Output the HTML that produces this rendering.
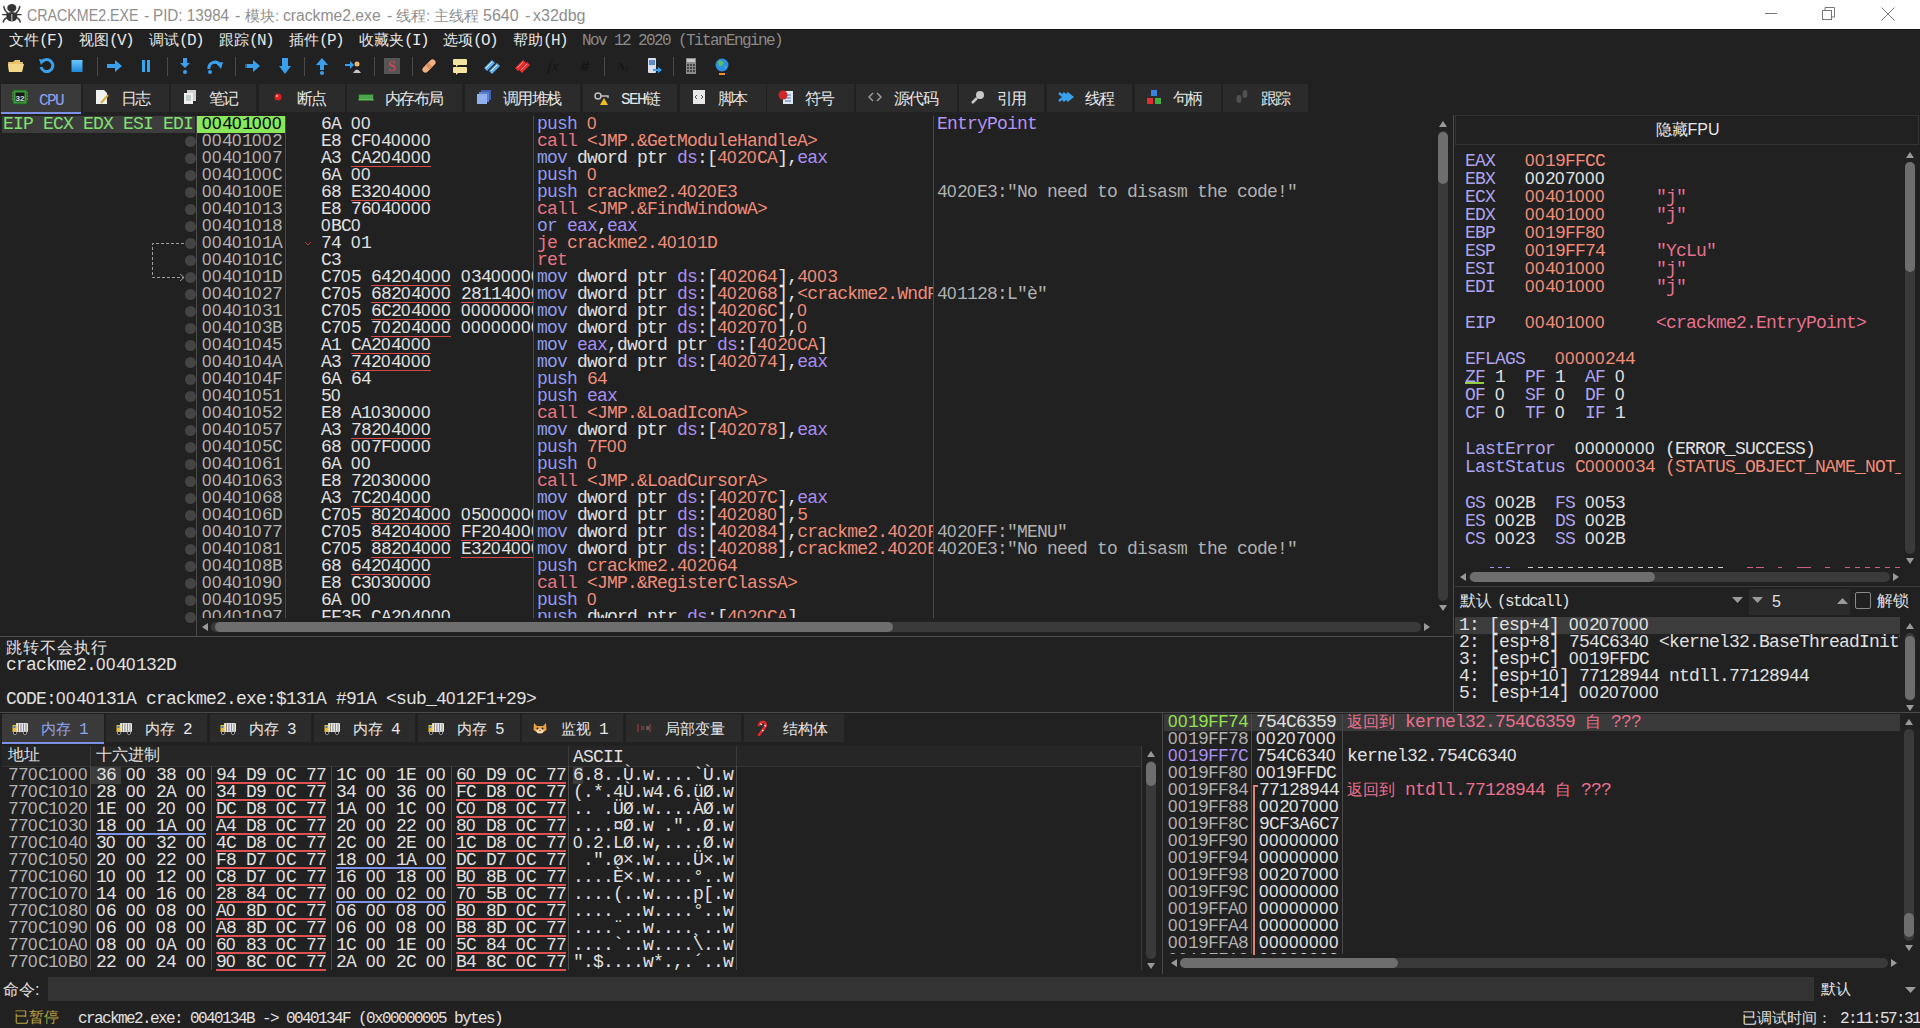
<!DOCTYPE html><html><head><meta charset="utf-8"><style>
html,body{margin:0;padding:0;width:1920px;height:1028px;overflow:hidden;background:#212121;}
.b{position:absolute;}
.t{position:absolute;white-space:pre;}
.m{position:absolute;white-space:pre;font-family:'Liberation Mono',monospace;font-size:18px;letter-spacing:-0.8px;color:#e0e0e0;}
.clip{position:absolute;overflow:hidden;}
svg{position:absolute;}
</style></head><body>
<div class="b" style="left:0px;top:0px;width:1920px;height:29px;background:#ffffff;"></div>
<svg style="left:0;top:0" width="26" height="28" viewBox="0 0 26 28">
<g stroke="#444" stroke-width="1.5" fill="none" stroke-linecap="round"><path d="M3.8 6.5 Q4.5 11 8 13.5"/><path d="M19.8 6.5 Q19 11 15.5 13.5"/><path d="M3.2 22 Q4 18.5 7.5 17.5"/><path d="M20.3 22 Q19.5 18.5 16 17.5"/></g>
<path d="M2.2 14.6 H21.6" stroke="#333" stroke-width="1.3"/>
<ellipse cx="11.8" cy="8" rx="4.6" ry="4" fill="#333"/>
<path d="M6.3 13.5 Q11.8 10.5 17.3 13.5 Q18 21.5 11.8 21.5 Q5.6 21.5 6.3 13.5 Z" fill="#333"/>
<rect x="11.1" y="14" width="1.4" height="7" fill="#aaa"/></svg>
<div class="t" style="left:27px;top:6px;color:#8e8e8e;font-size:16px;line-height:20px;font-family:'Liberation Sans',sans-serif;transform-origin:0 0;transform:scaleX(0.89)">CRACKME2.EXE</div>
<div class="t" style="left:144px;top:6px;color:#8e8e8e;font-size:16px;line-height:20px;font-family:'Liberation Sans',sans-serif;transform-origin:0 0;transform:scaleX(1)">-</div>
<div class="t" style="left:153px;top:6px;color:#8e8e8e;font-size:16px;line-height:20px;font-family:'Liberation Sans',sans-serif;transform-origin:0 0;transform:scaleX(0.95)">PID: 13984</div>
<div class="t" style="left:235px;top:6px;color:#8e8e8e;font-size:16px;line-height:20px;font-family:'Liberation Sans',sans-serif;transform-origin:0 0;transform:scaleX(1)">-</div>
<div class="t" style="left:245px;top:6px;color:#8e8e8e;font-size:15px;line-height:20px;font-family:'Liberation Sans',sans-serif;transform-origin:0 0;transform:scaleX(1)">模块:</div>
<div class="t" style="left:283px;top:6px;color:#8e8e8e;font-size:16px;line-height:20px;font-family:'Liberation Sans',sans-serif;transform-origin:0 0;transform:scaleX(0.98)">crackme2.exe</div>
<div class="t" style="left:387px;top:6px;color:#8e8e8e;font-size:16px;line-height:20px;font-family:'Liberation Sans',sans-serif;transform-origin:0 0;transform:scaleX(1)">-</div>
<div class="t" style="left:396px;top:6px;color:#8e8e8e;font-size:15px;line-height:20px;font-family:'Liberation Sans',sans-serif;transform-origin:0 0;transform:scaleX(1)">线程:</div>
<div class="t" style="left:434px;top:6px;color:#8e8e8e;font-size:15px;line-height:20px;font-family:'Liberation Sans',sans-serif;transform-origin:0 0;transform:scaleX(1)">主线程</div>
<div class="t" style="left:483px;top:6px;color:#8e8e8e;font-size:16px;line-height:20px;font-family:'Liberation Sans',sans-serif;transform-origin:0 0;transform:scaleX(1)">5640</div>
<div class="t" style="left:525px;top:6px;color:#8e8e8e;font-size:16px;line-height:20px;font-family:'Liberation Sans',sans-serif;transform-origin:0 0;transform:scaleX(1)">-</div>
<div class="t" style="left:533px;top:6px;color:#8e8e8e;font-size:16px;line-height:20px;font-family:'Liberation Sans',sans-serif;transform-origin:0 0;transform:scaleX(1)">x32dbg</div>
<div class="b" style="left:1765px;top:13px;width:12px;height:1px;background:#777;"></div>
<svg style="left:1822px;top:7px" width="14" height="14"><rect x="0.5" y="3.5" width="9" height="9" fill="none" stroke="#777"/><path d="M3 3.5 V0.5 H12.5 V10 H9.5" fill="none" stroke="#777"/></svg>
<svg style="left:1881px;top:7px" width="14" height="14"><path d="M0.5 0.5 L13.5 13.5 M13.5 0.5 L0.5 13.5" stroke="#777" stroke-width="1"/></svg>
<div class="b" style="left:0px;top:29px;width:1920px;height:1px;background:#161616;"></div>
<div class="t" style="left:9px;top:30px;color:#e8e8e8;font-size:15px;line-height:20px;font-family:'Liberation Sans',sans-serif">文件<span style="font-family:'Liberation Mono';font-size:16px;letter-spacing:-1.6px">(F)</span></div>
<div class="t" style="left:79px;top:30px;color:#e8e8e8;font-size:15px;line-height:20px;font-family:'Liberation Sans',sans-serif">视图<span style="font-family:'Liberation Mono';font-size:16px;letter-spacing:-1.6px">(V)</span></div>
<div class="t" style="left:149px;top:30px;color:#e8e8e8;font-size:15px;line-height:20px;font-family:'Liberation Sans',sans-serif">调试<span style="font-family:'Liberation Mono';font-size:16px;letter-spacing:-1.6px">(D)</span></div>
<div class="t" style="left:219px;top:30px;color:#e8e8e8;font-size:15px;line-height:20px;font-family:'Liberation Sans',sans-serif">跟踪<span style="font-family:'Liberation Mono';font-size:16px;letter-spacing:-1.6px">(N)</span></div>
<div class="t" style="left:289px;top:30px;color:#e8e8e8;font-size:15px;line-height:20px;font-family:'Liberation Sans',sans-serif">插件<span style="font-family:'Liberation Mono';font-size:16px;letter-spacing:-1.6px">(P)</span></div>
<div class="t" style="left:359px;top:30px;color:#e8e8e8;font-size:15px;line-height:20px;font-family:'Liberation Sans',sans-serif">收藏夹<span style="font-family:'Liberation Mono';font-size:16px;letter-spacing:-1.6px">(I)</span></div>
<div class="t" style="left:443px;top:30px;color:#e8e8e8;font-size:15px;line-height:20px;font-family:'Liberation Sans',sans-serif">选项<span style="font-family:'Liberation Mono';font-size:16px;letter-spacing:-1.6px">(O)</span></div>
<div class="t" style="left:513px;top:30px;color:#e8e8e8;font-size:15px;line-height:20px;font-family:'Liberation Sans',sans-serif">帮助<span style="font-family:'Liberation Mono';font-size:16px;letter-spacing:-1.6px">(H)</span></div>
<div class="t" style="left:582px;top:31px;color:#8a8a8a;font-size:16px;letter-spacing:-1.6px;line-height:20px;font-family:'Liberation Mono',monospace">Nov 12 2020 (TitanEngine)</div>
<svg style="left:7px;top:57px" width="18" height="18" viewBox="0 0 18 18"><path d="M1 5 H6 L8 3 H13 V5 H16 L15 15 H2 Z" fill="#e8c36a"/><path d="M1 7 H17 L15 15 H2 Z" fill="#f2d68a"/></svg>
<svg style="left:38px;top:57px" width="18" height="18" viewBox="0 0 18 18"><path d="M4 5 A6 6 0 1 1 3 10" stroke="#3ba0e8" stroke-width="3" fill="none"/><path d="M1 2 L7 3 L3 8 Z" fill="#3ba0e8"/></svg>
<svg style="left:68px;top:57px" width="18" height="18" viewBox="0 0 18 18"><defs><linearGradient id="gs" x1="0" y1="0" x2="0" y2="1"><stop offset="0" stop-color="#6cc8ff"/><stop offset="1" stop-color="#1f88d8"/></linearGradient></defs><rect x="3.5" y="3" width="11" height="12" fill="url(#gs)"/></svg>
<div class="b" style="left:97px;top:57px;width:1px;height:19px;background:#4a4a4a;"></div>
<svg style="left:106px;top:57px" width="18" height="18" viewBox="0 0 18 18"><path d="M1 7 H9 V3 L16 9 L9 15 V11 H1 Z" fill="#3aa0ee"/></svg>
<svg style="left:137px;top:57px" width="18" height="18" viewBox="0 0 18 18"><rect x="5" y="3" width="3" height="12" fill="#38a6ee"/><rect x="10" y="3" width="3" height="12" fill="#38a6ee"/></svg>
<div class="b" style="left:167px;top:57px;width:1px;height:19px;background:#4a4a4a;"></div>
<svg style="left:176px;top:57px" width="18" height="18" viewBox="0 0 18 18"><path d="M7 1 H11 V6 H14 L9 11 L4 6 H7 Z" fill="#3aa0ee"/><circle cx="9" cy="15" r="2" fill="#3aa0ee"/></svg>
<svg style="left:206px;top:57px" width="18" height="18" viewBox="0 0 18 18"><path d="M3 12 A6 6 0 0 1 14 8" stroke="#3aa0ee" stroke-width="3" fill="none"/><path d="M10 6 L17 5 L15 12 Z" fill="#3aa0ee"/><circle cx="4" cy="15" r="2" fill="#3aa0ee"/></svg>
<div class="b" style="left:235px;top:57px;width:1px;height:19px;background:#4a4a4a;"></div>
<svg style="left:244px;top:57px" width="18" height="18" viewBox="0 0 18 18"><path d="M1 7 H9 V3 L16 9 L9 15 V11 H1 Z" fill="#3aa0ee"/><path d="M1 8 H3 M1 10 H3" stroke="#212121"/></svg>
<svg style="left:276px;top:57px" width="18" height="18" viewBox="0 0 18 18"><path d="M6 1 H12 V9 H15 L9 17 L3 9 H6 Z" fill="#3aa0ee"/></svg>
<div class="b" style="left:304px;top:57px;width:1px;height:19px;background:#4a4a4a;"></div>
<svg style="left:313px;top:57px" width="18" height="18" viewBox="0 0 18 18"><path d="M9 1 L15 8 H11 V13 H7 V8 H3 Z" fill="#3aa0ee"/><circle cx="9" cy="16" r="2" fill="#3aa0ee"/></svg>
<svg style="left:344px;top:57px" width="18" height="18" viewBox="0 0 18 18"><path d="M1 7 H6 V4 L10 8 L6 12 V9 H1 Z" fill="#3aa0ee"/><circle cx="13" cy="7" r="2.5" fill="#e8b870"/><path d="M9 16 Q13 9 17 16 Z" fill="#c8c8c8"/></svg>
<div class="b" style="left:374px;top:57px;width:1px;height:19px;background:#4a4a4a;"></div>
<svg style="left:383px;top:57px" width="18" height="18" viewBox="0 0 18 18"><rect x="1" y="1" width="16" height="16" fill="#555"/><text x="9" y="14" font-size="14" font-weight="bold" fill="#c04858" text-anchor="middle" font-family="Liberation Serif">S</text></svg>
<div class="b" style="left:412px;top:57px;width:1px;height:19px;background:#4a4a4a;"></div>
<svg style="left:420px;top:57px" width="18" height="18" viewBox="0 0 18 18"><rect x="1" y="6" width="16" height="6" rx="3" fill="#f0b080" transform="rotate(-45 9 9)"/><rect x="7" y="6" width="4" height="6" fill="#d89060" transform="rotate(-45 9 9)"/></svg>
<svg style="left:451px;top:57px" width="18" height="18" viewBox="0 0 18 18"><rect x="2" y="2" width="14" height="6" rx="1" fill="#f4e4a0"/><rect x="2" y="10" width="14" height="6" rx="1" fill="#f4e4a0"/><path d="M5 8 L5 10 L7 8Z M5 16 L5 18 L7 16Z" fill="#f4e4a0"/></svg>
<svg style="left:483px;top:57px" width="18" height="18" viewBox="0 0 18 18"><path d="M1 11 L9 3 L12 6 L4 14 Z" fill="#60b0f0"/><path d="M6 14 L14 6 L17 9 L9 17 Z" fill="#60b0f0"/><path d="M3 11 L9 5 M8 14 L14 8" stroke="#e8f4ff" stroke-width="1"/></svg>
<svg style="left:514px;top:57px" width="18" height="18" viewBox="0 0 18 18"><path d="M1 11 L9 3 L12 6 L4 14 Z" fill="#e83030"/><path d="M5 13 L13 5 L16 8 L8 16 Z" fill="#e83030"/><path d="M3 11 L9 5 M7 13 L13 7" stroke="#ff9090" stroke-width="1"/></svg>
<svg style="left:544px;top:57px" width="18" height="18" viewBox="0 0 18 18"><text x="9" y="14" font-size="15" font-style="italic" fill="#141414" text-anchor="middle" font-family="Liberation Serif">fx</text></svg>
<svg style="left:576px;top:57px" width="18" height="18" viewBox="0 0 18 18"><text x="9" y="14" font-size="15" font-weight="bold" fill="#141414" text-anchor="middle" font-family="Liberation Sans">#</text></svg>
<div class="b" style="left:604px;top:57px;width:1px;height:19px;background:#4a4a4a;"></div>
<svg style="left:614px;top:57px" width="18" height="18" viewBox="0 0 18 18"><text x="7" y="13" font-size="11" font-weight="bold" fill="#161616" text-anchor="middle" font-family="Liberation Serif">A</text><text x="13" y="14" font-size="7" fill="#161616" text-anchor="middle" font-family="Liberation Sans">z</text></svg>
<svg style="left:645px;top:57px" width="18" height="18" viewBox="0 0 18 18"><rect x="3" y="1" width="8" height="15" rx="1" fill="#d8e0ec"/><rect x="4" y="3" width="6" height="5" fill="#5a8ac8"/><path d="M8 12 H13 V10 L17 13 L13 16 V14 H8 Z" fill="#3aa0ee"/></svg>
<div class="b" style="left:673px;top:57px;width:1px;height:19px;background:#4a4a4a;"></div>
<svg style="left:682px;top:57px" width="18" height="18" viewBox="0 0 18 18"><rect x="4" y="1" width="10" height="16" fill="#8a8a8a"/><rect x="5" y="2" width="8" height="3" fill="#c8c8c8"/><g fill="#444"><rect x="5" y="7" width="2" height="2"/><rect x="8" y="7" width="2" height="2"/><rect x="11" y="7" width="2" height="2"/><rect x="5" y="10" width="2" height="2"/><rect x="8" y="10" width="2" height="2"/><rect x="11" y="10" width="2" height="2"/><rect x="5" y="13" width="2" height="2"/><rect x="8" y="13" width="2" height="2"/><rect x="11" y="13" width="2" height="2"/></g></svg>
<svg style="left:713px;top:57px" width="18" height="18" viewBox="0 0 18 18"><circle cx="9" cy="8" r="6.5" fill="#2a90e0"/><path d="M5 4 Q9 3 11 6 Q9 10 6 9 Z M11 9 Q14 9 13 12 Z" fill="#60c060"/><rect x="6" y="16" width="6" height="2" fill="#f09020"/></svg>
<div class="b" style="left:1px;top:84px;width:80px;height:28px;background:#3a3a3a;"></div>
<div class="b" style="left:1px;top:112px;width:80px;height:2px;background:#7d92e6;"></div>
<svg style="left:12px;top:89px" width="16" height="16" viewBox="0 0 16 16"><rect x="1" y="1" width="14" height="14" fill="#3f9a3f" stroke="#1a5a1a"/><rect x="3.5" y="3.5" width="9" height="9" fill="#181818"/><text x="8" y="11.5" font-size="8" fill="#e0e0e0" text-anchor="middle" font-family="Liberation Sans" font-weight="bold">32</text><path d="M1 4H0M1 7H0M1 10H0M15 4H16M15 7H16M15 10H16" stroke="#8bc34a"/></svg>
<div class="t" style="left:39px;top:91px;color:#8fa2ee;font-size:16px;line-height:20px;font-family:'Liberation Mono',monospace;letter-spacing:-1.6px">CPU</div>
<div class="b" style="left:83px;top:84px;width:86px;height:28px;background:#2b2b2b;"></div>
<svg style="left:94px;top:89px" width="16" height="16" viewBox="0 0 16 16"><path d="M2 1 H10 L13 4 V15 H2 Z" fill="#f0f0f0"/><path d="M7 14 L14 6" stroke="#d8b040" stroke-width="2"/></svg>
<div class="t" style="left:121px;top:90px;color:#e6e6e6;font-size:16px;line-height:20px;font-family:'Liberation Mono',monospace;letter-spacing:-1.6px">日志</div>
<div class="b" style="left:171px;top:84px;width:85px;height:28px;background:#2b2b2b;"></div>
<svg style="left:182px;top:89px" width="16" height="16" viewBox="0 0 16 16"><rect x="5" y="1" width="9" height="11" fill="#d0d0d0"/><rect x="2" y="4" width="9" height="11" fill="#f0f0f0"/><path d="M4 7H9M4 9H9M4 11H9" stroke="#9aa"/></svg>
<div class="t" style="left:209px;top:90px;color:#e6e6e6;font-size:16px;line-height:20px;font-family:'Liberation Mono',monospace;letter-spacing:-1.6px">笔记</div>
<div class="b" style="left:259px;top:84px;width:86px;height:28px;background:#2b2b2b;"></div>
<svg style="left:270px;top:89px" width="16" height="16" viewBox="0 0 16 16"><circle cx="8" cy="8" r="3.5" fill="#e02020"/><circle cx="7" cy="7" r="1.2" fill="#ff9090"/></svg>
<div class="t" style="left:297px;top:90px;color:#e6e6e6;font-size:16px;line-height:20px;font-family:'Liberation Mono',monospace;letter-spacing:-1.6px">断点</div>
<div class="b" style="left:347px;top:84px;width:115px;height:28px;background:#2b2b2b;"></div>
<svg style="left:358px;top:89px" width="16" height="16" viewBox="0 0 16 16"><rect x="0.5" y="5" width="15" height="6" fill="#1f6a1f"/><path d="M2 6V10M4 6V10M6 6V10M8 6V10M10 6V10M12 6V10M14 6V10" stroke="#7fdc7f"/><rect x="0.5" y="10" width="15" height="1.5" fill="#5ac05a"/></svg>
<div class="t" style="left:385px;top:90px;color:#e6e6e6;font-size:16px;line-height:20px;font-family:'Liberation Mono',monospace;letter-spacing:-1.6px">内存布局</div>
<div class="b" style="left:465px;top:84px;width:115px;height:28px;background:#2b2b2b;"></div>
<svg style="left:476px;top:89px" width="16" height="16" viewBox="0 0 16 16"><rect x="5" y="1" width="10" height="10" fill="#4060b0"/><rect x="3" y="3" width="10" height="10" fill="#6080d0"/><rect x="1" y="5" width="10" height="10" fill="#90b0f0"/></svg>
<div class="t" style="left:503px;top:90px;color:#e6e6e6;font-size:16px;line-height:20px;font-family:'Liberation Mono',monospace;letter-spacing:-1.6px">调用堆栈</div>
<div class="b" style="left:583px;top:84px;width:94px;height:28px;background:#2b2b2b;"></div>
<svg style="left:594px;top:89px" width="16" height="16" viewBox="0 0 16 16"><circle cx="4" cy="7" r="3" fill="none" stroke="#c0c0c0" stroke-width="1.5"/><path d="M7 7 H14 V9" stroke="#c0c0c0" stroke-width="1.5" fill="none"/><path d="M10 9 L14 16 H6 Z" fill="#f0c020"/></svg>
<div class="t" style="left:621px;top:90px;color:#e6e6e6;font-size:16px;line-height:20px;font-family:'Liberation Mono',monospace;letter-spacing:-1.6px">SEH链</div>
<div class="b" style="left:680px;top:84px;width:86px;height:28px;background:#2b2b2b;"></div>
<svg style="left:691px;top:89px" width="16" height="16" viewBox="0 0 16 16"><rect x="2" y="1" width="12" height="14" fill="#e8e8e8"/><path d="M6 6 L4 8 L6 10 M10 6 L12 8 L10 10" stroke="#555" fill="none"/></svg>
<div class="t" style="left:718px;top:90px;color:#e6e6e6;font-size:16px;line-height:20px;font-family:'Liberation Mono',monospace;letter-spacing:-1.6px">脚本</div>
<div class="b" style="left:767px;top:84px;width:87px;height:28px;background:#2b2b2b;"></div>
<svg style="left:778px;top:89px" width="16" height="16" viewBox="0 0 16 16"><rect x="5" y="2" width="10" height="13" fill="#e0e8f0"/><path d="M7 6H13M7 9H13M7 12H13" stroke="#5070c0"/><circle cx="5" cy="6" r="4.5" fill="#d02828"/></svg>
<div class="t" style="left:805px;top:90px;color:#e6e6e6;font-size:16px;line-height:20px;font-family:'Liberation Mono',monospace;letter-spacing:-1.6px">符号</div>
<div class="b" style="left:856px;top:84px;width:101px;height:28px;background:#2b2b2b;"></div>
<svg style="left:867px;top:89px" width="16" height="16" viewBox="0 0 16 16"><path d="M6 4 L2 8 L6 12 M10 4 L14 8 L10 12" stroke="#9a9a9a" stroke-width="1.5" fill="none"/></svg>
<div class="t" style="left:894px;top:90px;color:#e6e6e6;font-size:16px;line-height:20px;font-family:'Liberation Mono',monospace;letter-spacing:-1.6px">源代码</div>
<div class="b" style="left:959px;top:84px;width:85px;height:28px;background:#2b2b2b;"></div>
<svg style="left:970px;top:89px" width="16" height="16" viewBox="0 0 16 16"><circle cx="10" cy="6" r="4" fill="#c8c8c8"/><path d="M7 9 L2 14" stroke="#c8c8c8" stroke-width="2.5"/></svg>
<div class="t" style="left:997px;top:90px;color:#e6e6e6;font-size:16px;line-height:20px;font-family:'Liberation Mono',monospace;letter-spacing:-1.6px">引用</div>
<div class="b" style="left:1047px;top:84px;width:85px;height:28px;background:#2b2b2b;"></div>
<svg style="left:1058px;top:89px" width="16" height="16" viewBox="0 0 16 16"><path d="M1 4 L6 8 L1 12 M5 4 L10 8 L5 12 M9 4 L14 8 L9 12" stroke="#3aa0ee" stroke-width="2.5" fill="none"/></svg>
<div class="t" style="left:1085px;top:90px;color:#e6e6e6;font-size:16px;line-height:20px;font-family:'Liberation Mono',monospace;letter-spacing:-1.6px">线程</div>
<div class="b" style="left:1135px;top:84px;width:86px;height:28px;background:#2b2b2b;"></div>
<svg style="left:1146px;top:89px" width="16" height="16" viewBox="0 0 16 16"><rect x="5" y="1" width="6" height="6" fill="#3a80e0"/><rect x="1" y="9" width="6" height="6" fill="#e03030"/><rect x="9" y="9" width="6" height="6" fill="#40b040"/></svg>
<div class="t" style="left:1173px;top:90px;color:#e6e6e6;font-size:16px;line-height:20px;font-family:'Liberation Mono',monospace;letter-spacing:-1.6px">句柄</div>
<div class="b" style="left:1223px;top:84px;width:85px;height:28px;background:#2b2b2b;"></div>
<svg style="left:1234px;top:89px" width="16" height="16" viewBox="0 0 16 16"><ellipse cx="5" cy="10" rx="2.5" ry="4" fill="#505050"/><ellipse cx="11" cy="5" rx="2.5" ry="4" fill="#505050"/></svg>
<div class="t" style="left:1261px;top:90px;color:#e6e6e6;font-size:16px;line-height:20px;font-family:'Liberation Mono',monospace;letter-spacing:-1.6px">跟踪</div>
<div class="b" style="left:2px;top:116px;width:193px;height:17px;background:#3c3c3c;"></div>
<div class="m" style="left:3px;top:116px;line-height:17px;"><span style="color:#80e070">EIP ECX EDX ESI EDI</span></div>
<div class="b" style="left:196px;top:116px;width:1px;height:520px;background:#4a4a4a;"></div>
<div class="b" style="left:285px;top:116px;width:1px;height:502px;background:#4a4a4a;"></div>
<div class="b" style="left:533px;top:116px;width:1px;height:502px;background:#4a4a4a;"></div>
<div class="b" style="left:933px;top:116px;width:1px;height:502px;background:#4a4a4a;"></div>
<div class="b" style="left:197px;top:116px;width:88px;height:17px;background:#8ae65a;"></div>
<div class="clip" style="left:0;top:116px;width:1436px;height:502px">
<div class="m" style="left:202px;top:0px;line-height:17px;"><span style="color:#000000"><span style="font-family:'Liberation Sans';font-size:17px;letter-spacing:0.545px;line-height:0">00</span>4<span style="font-family:'Liberation Sans';font-size:17px;letter-spacing:0.545px;line-height:0">0</span>1<span style="font-family:'Liberation Sans';font-size:17px;letter-spacing:0.545px;line-height:0">000</span></span></div>
<div class="clip" style="left:286px;top:0px;width:247px;height:17px"><div class="m" style="left:35px;top:0;line-height:17px">6A <span style="font-family:'Liberation Sans';font-size:17px;letter-spacing:0.545px;line-height:0">00</span></div></div>
<div class="clip" style="left:534px;top:0px;width:399px;height:17px"><div class="m" style="left:3px;top:0;line-height:17px"><span style="color:#8f9cf0">push</span> <span style="color:#f08c78"><span style="font-family:'Liberation Sans';font-size:17px;letter-spacing:0.545px;line-height:0">0</span></span></div></div>
<div class="m" style="left:937px;top:0px;line-height:17px;"><span style="color:#b494f4">EntryPoint</span></div>
<div class="m" style="left:202px;top:17px;line-height:17px;"><span style="color:#b0b0b0"><span style="font-family:'Liberation Sans';font-size:17px;letter-spacing:0.545px;line-height:0">00</span>4<span style="font-family:'Liberation Sans';font-size:17px;letter-spacing:0.545px;line-height:0">0</span>1<span style="font-family:'Liberation Sans';font-size:17px;letter-spacing:0.545px;line-height:0">00</span>2</span></div>
<div class="clip" style="left:286px;top:17px;width:247px;height:17px"><div class="m" style="left:35px;top:0;line-height:17px">E8 CF<span style="font-family:'Liberation Sans';font-size:17px;letter-spacing:0.545px;line-height:0">0</span>4<span style="font-family:'Liberation Sans';font-size:17px;letter-spacing:0.545px;line-height:0">0000</span></div></div>
<div class="clip" style="left:534px;top:17px;width:399px;height:17px"><div class="m" style="left:3px;top:0;line-height:17px"><span style="color:#e87482">call</span> <span style="color:#f08c78">&lt;JMP.&amp;GetModuleHandleA&gt;</span></div></div>
<div class="m" style="left:202px;top:34px;line-height:17px;"><span style="color:#b0b0b0"><span style="font-family:'Liberation Sans';font-size:17px;letter-spacing:0.545px;line-height:0">00</span>4<span style="font-family:'Liberation Sans';font-size:17px;letter-spacing:0.545px;line-height:0">0</span>1<span style="font-family:'Liberation Sans';font-size:17px;letter-spacing:0.545px;line-height:0">00</span>7</span></div>
<div class="clip" style="left:286px;top:34px;width:247px;height:17px"><div class="m" style="left:35px;top:0;line-height:17px">A3 CA2<span style="font-family:'Liberation Sans';font-size:17px;letter-spacing:0.545px;line-height:0">0</span>4<span style="font-family:'Liberation Sans';font-size:17px;letter-spacing:0.545px;line-height:0">000</span></div><div class="b" style="left:65px;top:16px;width:80px;height:1px;background:#d84848"></div></div>
<div class="clip" style="left:534px;top:34px;width:399px;height:17px"><div class="m" style="left:3px;top:0;line-height:17px"><span style="color:#8f9cf0">mov</span><span style="color:#e0e0e0"> dword ptr </span><span style="color:#a88ef0">ds</span><span style="color:#e0e0e0">:[</span><span style="color:#f08c78">4<span style="font-family:'Liberation Sans';font-size:17px;letter-spacing:0.545px;line-height:0">0</span>2<span style="font-family:'Liberation Sans';font-size:17px;letter-spacing:0.545px;line-height:0">0</span>CA</span><span style="color:#e0e0e0">],</span><span style="color:#a88ef0">eax</span></div></div>
<div class="m" style="left:202px;top:51px;line-height:17px;"><span style="color:#b0b0b0"><span style="font-family:'Liberation Sans';font-size:17px;letter-spacing:0.545px;line-height:0">00</span>4<span style="font-family:'Liberation Sans';font-size:17px;letter-spacing:0.545px;line-height:0">0</span>1<span style="font-family:'Liberation Sans';font-size:17px;letter-spacing:0.545px;line-height:0">00</span>C</span></div>
<div class="clip" style="left:286px;top:51px;width:247px;height:17px"><div class="m" style="left:35px;top:0;line-height:17px">6A <span style="font-family:'Liberation Sans';font-size:17px;letter-spacing:0.545px;line-height:0">00</span></div></div>
<div class="clip" style="left:534px;top:51px;width:399px;height:17px"><div class="m" style="left:3px;top:0;line-height:17px"><span style="color:#8f9cf0">push</span> <span style="color:#f08c78"><span style="font-family:'Liberation Sans';font-size:17px;letter-spacing:0.545px;line-height:0">0</span></span></div></div>
<div class="m" style="left:202px;top:68px;line-height:17px;"><span style="color:#b0b0b0"><span style="font-family:'Liberation Sans';font-size:17px;letter-spacing:0.545px;line-height:0">00</span>4<span style="font-family:'Liberation Sans';font-size:17px;letter-spacing:0.545px;line-height:0">0</span>1<span style="font-family:'Liberation Sans';font-size:17px;letter-spacing:0.545px;line-height:0">00</span>E</span></div>
<div class="clip" style="left:286px;top:68px;width:247px;height:17px"><div class="m" style="left:35px;top:0;line-height:17px">68 E32<span style="font-family:'Liberation Sans';font-size:17px;letter-spacing:0.545px;line-height:0">0</span>4<span style="font-family:'Liberation Sans';font-size:17px;letter-spacing:0.545px;line-height:0">000</span></div><div class="b" style="left:65px;top:16px;width:80px;height:1px;background:#d84848"></div></div>
<div class="clip" style="left:534px;top:68px;width:399px;height:17px"><div class="m" style="left:3px;top:0;line-height:17px"><span style="color:#8f9cf0">push</span> <span style="color:#f08c78">crackme2.4<span style="font-family:'Liberation Sans';font-size:17px;letter-spacing:0.545px;line-height:0">0</span>2<span style="font-family:'Liberation Sans';font-size:17px;letter-spacing:0.545px;line-height:0">0</span>E3</span></div></div>
<div class="m" style="left:937px;top:68px;line-height:17px;"><span style="color:#b0b0b0">4<span style="font-family:'Liberation Sans';font-size:17px;letter-spacing:0.545px;line-height:0">0</span>2<span style="font-family:'Liberation Sans';font-size:17px;letter-spacing:0.545px;line-height:0">0</span>E3:"No need to disasm the code!"</span></div>
<div class="m" style="left:202px;top:85px;line-height:17px;"><span style="color:#b0b0b0"><span style="font-family:'Liberation Sans';font-size:17px;letter-spacing:0.545px;line-height:0">00</span>4<span style="font-family:'Liberation Sans';font-size:17px;letter-spacing:0.545px;line-height:0">0</span>1<span style="font-family:'Liberation Sans';font-size:17px;letter-spacing:0.545px;line-height:0">0</span>13</span></div>
<div class="clip" style="left:286px;top:85px;width:247px;height:17px"><div class="m" style="left:35px;top:0;line-height:17px">E8 76<span style="font-family:'Liberation Sans';font-size:17px;letter-spacing:0.545px;line-height:0">0</span>4<span style="font-family:'Liberation Sans';font-size:17px;letter-spacing:0.545px;line-height:0">0000</span></div></div>
<div class="clip" style="left:534px;top:85px;width:399px;height:17px"><div class="m" style="left:3px;top:0;line-height:17px"><span style="color:#e87482">call</span> <span style="color:#f08c78">&lt;JMP.&amp;FindWindowA&gt;</span></div></div>
<div class="m" style="left:202px;top:102px;line-height:17px;"><span style="color:#b0b0b0"><span style="font-family:'Liberation Sans';font-size:17px;letter-spacing:0.545px;line-height:0">00</span>4<span style="font-family:'Liberation Sans';font-size:17px;letter-spacing:0.545px;line-height:0">0</span>1<span style="font-family:'Liberation Sans';font-size:17px;letter-spacing:0.545px;line-height:0">0</span>18</span></div>
<div class="clip" style="left:286px;top:102px;width:247px;height:17px"><div class="m" style="left:35px;top:0;line-height:17px"><span style="font-family:'Liberation Sans';font-size:17px;letter-spacing:0.545px;line-height:0">0</span>BC<span style="font-family:'Liberation Sans';font-size:17px;letter-spacing:0.545px;line-height:0">0</span></div></div>
<div class="clip" style="left:534px;top:102px;width:399px;height:17px"><div class="m" style="left:3px;top:0;line-height:17px"><span style="color:#8f9cf0">or</span> <span style="color:#a88ef0">eax</span><span style="color:#e0e0e0">,</span><span style="color:#a88ef0">eax</span></div></div>
<div class="m" style="left:202px;top:119px;line-height:17px;"><span style="color:#b0b0b0"><span style="font-family:'Liberation Sans';font-size:17px;letter-spacing:0.545px;line-height:0">00</span>4<span style="font-family:'Liberation Sans';font-size:17px;letter-spacing:0.545px;line-height:0">0</span>1<span style="font-family:'Liberation Sans';font-size:17px;letter-spacing:0.545px;line-height:0">0</span>1A</span></div>
<div class="clip" style="left:286px;top:119px;width:247px;height:17px"><div class="m" style="left:35px;top:0;line-height:17px">74 <span style="font-family:'Liberation Sans';font-size:17px;letter-spacing:0.545px;line-height:0">0</span>1</div></div>
<div class="clip" style="left:534px;top:119px;width:399px;height:17px"><div class="m" style="left:3px;top:0;line-height:17px"><span style="color:#e87482">je</span> <span style="color:#f08c78">crackme2.4<span style="font-family:'Liberation Sans';font-size:17px;letter-spacing:0.545px;line-height:0">0</span>1<span style="font-family:'Liberation Sans';font-size:17px;letter-spacing:0.545px;line-height:0">0</span>1D</span></div></div>
<div class="m" style="left:202px;top:136px;line-height:17px;"><span style="color:#b0b0b0"><span style="font-family:'Liberation Sans';font-size:17px;letter-spacing:0.545px;line-height:0">00</span>4<span style="font-family:'Liberation Sans';font-size:17px;letter-spacing:0.545px;line-height:0">0</span>1<span style="font-family:'Liberation Sans';font-size:17px;letter-spacing:0.545px;line-height:0">0</span>1C</span></div>
<div class="clip" style="left:286px;top:136px;width:247px;height:17px"><div class="m" style="left:35px;top:0;line-height:17px">C3</div></div>
<div class="clip" style="left:534px;top:136px;width:399px;height:17px"><div class="m" style="left:3px;top:0;line-height:17px"><span style="color:#e87482">ret</span></div></div>
<div class="m" style="left:202px;top:153px;line-height:17px;"><span style="color:#b0b0b0"><span style="font-family:'Liberation Sans';font-size:17px;letter-spacing:0.545px;line-height:0">00</span>4<span style="font-family:'Liberation Sans';font-size:17px;letter-spacing:0.545px;line-height:0">0</span>1<span style="font-family:'Liberation Sans';font-size:17px;letter-spacing:0.545px;line-height:0">0</span>1D</span></div>
<div class="clip" style="left:286px;top:153px;width:247px;height:17px"><div class="m" style="left:35px;top:0;line-height:17px">C7<span style="font-family:'Liberation Sans';font-size:17px;letter-spacing:0.545px;line-height:0">0</span>5 642<span style="font-family:'Liberation Sans';font-size:17px;letter-spacing:0.545px;line-height:0">0</span>4<span style="font-family:'Liberation Sans';font-size:17px;letter-spacing:0.545px;line-height:0">000</span> <span style="font-family:'Liberation Sans';font-size:17px;letter-spacing:0.545px;line-height:0">0</span>34<span style="font-family:'Liberation Sans';font-size:17px;letter-spacing:0.545px;line-height:0">00000</span></div><div class="b" style="left:85px;top:16px;width:80px;height:1px;background:#d84848"></div></div>
<div class="clip" style="left:534px;top:153px;width:399px;height:17px"><div class="m" style="left:3px;top:0;line-height:17px"><span style="color:#8f9cf0">mov</span><span style="color:#e0e0e0"> dword ptr </span><span style="color:#a88ef0">ds</span><span style="color:#e0e0e0">:[</span><span style="color:#f08c78">4<span style="font-family:'Liberation Sans';font-size:17px;letter-spacing:0.545px;line-height:0">0</span>2<span style="font-family:'Liberation Sans';font-size:17px;letter-spacing:0.545px;line-height:0">0</span>64</span><span style="color:#e0e0e0">],</span><span style="color:#f08c78">4<span style="font-family:'Liberation Sans';font-size:17px;letter-spacing:0.545px;line-height:0">00</span>3</span></div></div>
<div class="m" style="left:202px;top:170px;line-height:17px;"><span style="color:#b0b0b0"><span style="font-family:'Liberation Sans';font-size:17px;letter-spacing:0.545px;line-height:0">00</span>4<span style="font-family:'Liberation Sans';font-size:17px;letter-spacing:0.545px;line-height:0">0</span>1<span style="font-family:'Liberation Sans';font-size:17px;letter-spacing:0.545px;line-height:0">0</span>27</span></div>
<div class="clip" style="left:286px;top:170px;width:247px;height:17px"><div class="m" style="left:35px;top:0;line-height:17px">C7<span style="font-family:'Liberation Sans';font-size:17px;letter-spacing:0.545px;line-height:0">0</span>5 682<span style="font-family:'Liberation Sans';font-size:17px;letter-spacing:0.545px;line-height:0">0</span>4<span style="font-family:'Liberation Sans';font-size:17px;letter-spacing:0.545px;line-height:0">000</span> 28114<span style="font-family:'Liberation Sans';font-size:17px;letter-spacing:0.545px;line-height:0">000</span></div><div class="b" style="left:85px;top:16px;width:80px;height:1px;background:#d84848"></div><div class="b" style="left:175px;top:16px;width:80px;height:1px;background:#d84848"></div></div>
<div class="clip" style="left:534px;top:170px;width:399px;height:17px"><div class="m" style="left:3px;top:0;line-height:17px"><span style="color:#8f9cf0">mov</span><span style="color:#e0e0e0"> dword ptr </span><span style="color:#a88ef0">ds</span><span style="color:#e0e0e0">:[</span><span style="color:#f08c78">4<span style="font-family:'Liberation Sans';font-size:17px;letter-spacing:0.545px;line-height:0">0</span>2<span style="font-family:'Liberation Sans';font-size:17px;letter-spacing:0.545px;line-height:0">0</span>68</span><span style="color:#e0e0e0">],</span><span style="color:#f08c78">&lt;crackme2.WndProc&gt;</span></div></div>
<div class="m" style="left:937px;top:170px;line-height:17px;"><span style="color:#b0b0b0">4<span style="font-family:'Liberation Sans';font-size:17px;letter-spacing:0.545px;line-height:0">0</span>1128:L"è"</span></div>
<div class="m" style="left:202px;top:187px;line-height:17px;"><span style="color:#b0b0b0"><span style="font-family:'Liberation Sans';font-size:17px;letter-spacing:0.545px;line-height:0">00</span>4<span style="font-family:'Liberation Sans';font-size:17px;letter-spacing:0.545px;line-height:0">0</span>1<span style="font-family:'Liberation Sans';font-size:17px;letter-spacing:0.545px;line-height:0">0</span>31</span></div>
<div class="clip" style="left:286px;top:187px;width:247px;height:17px"><div class="m" style="left:35px;top:0;line-height:17px">C7<span style="font-family:'Liberation Sans';font-size:17px;letter-spacing:0.545px;line-height:0">0</span>5 6C2<span style="font-family:'Liberation Sans';font-size:17px;letter-spacing:0.545px;line-height:0">0</span>4<span style="font-family:'Liberation Sans';font-size:17px;letter-spacing:0.545px;line-height:0">000</span> <span style="font-family:'Liberation Sans';font-size:17px;letter-spacing:0.545px;line-height:0">00000000</span></div><div class="b" style="left:85px;top:16px;width:80px;height:1px;background:#d84848"></div></div>
<div class="clip" style="left:534px;top:187px;width:399px;height:17px"><div class="m" style="left:3px;top:0;line-height:17px"><span style="color:#8f9cf0">mov</span><span style="color:#e0e0e0"> dword ptr </span><span style="color:#a88ef0">ds</span><span style="color:#e0e0e0">:[</span><span style="color:#f08c78">4<span style="font-family:'Liberation Sans';font-size:17px;letter-spacing:0.545px;line-height:0">0</span>2<span style="font-family:'Liberation Sans';font-size:17px;letter-spacing:0.545px;line-height:0">0</span>6C</span><span style="color:#e0e0e0">],</span><span style="color:#f08c78"><span style="font-family:'Liberation Sans';font-size:17px;letter-spacing:0.545px;line-height:0">0</span></span></div></div>
<div class="m" style="left:202px;top:204px;line-height:17px;"><span style="color:#b0b0b0"><span style="font-family:'Liberation Sans';font-size:17px;letter-spacing:0.545px;line-height:0">00</span>4<span style="font-family:'Liberation Sans';font-size:17px;letter-spacing:0.545px;line-height:0">0</span>1<span style="font-family:'Liberation Sans';font-size:17px;letter-spacing:0.545px;line-height:0">0</span>3B</span></div>
<div class="clip" style="left:286px;top:204px;width:247px;height:17px"><div class="m" style="left:35px;top:0;line-height:17px">C7<span style="font-family:'Liberation Sans';font-size:17px;letter-spacing:0.545px;line-height:0">0</span>5 7<span style="font-family:'Liberation Sans';font-size:17px;letter-spacing:0.545px;line-height:0">0</span>2<span style="font-family:'Liberation Sans';font-size:17px;letter-spacing:0.545px;line-height:0">0</span>4<span style="font-family:'Liberation Sans';font-size:17px;letter-spacing:0.545px;line-height:0">000</span> <span style="font-family:'Liberation Sans';font-size:17px;letter-spacing:0.545px;line-height:0">00000000</span></div><div class="b" style="left:85px;top:16px;width:80px;height:1px;background:#d84848"></div></div>
<div class="clip" style="left:534px;top:204px;width:399px;height:17px"><div class="m" style="left:3px;top:0;line-height:17px"><span style="color:#8f9cf0">mov</span><span style="color:#e0e0e0"> dword ptr </span><span style="color:#a88ef0">ds</span><span style="color:#e0e0e0">:[</span><span style="color:#f08c78">4<span style="font-family:'Liberation Sans';font-size:17px;letter-spacing:0.545px;line-height:0">0</span>2<span style="font-family:'Liberation Sans';font-size:17px;letter-spacing:0.545px;line-height:0">0</span>7<span style="font-family:'Liberation Sans';font-size:17px;letter-spacing:0.545px;line-height:0">0</span></span><span style="color:#e0e0e0">],</span><span style="color:#f08c78"><span style="font-family:'Liberation Sans';font-size:17px;letter-spacing:0.545px;line-height:0">0</span></span></div></div>
<div class="m" style="left:202px;top:221px;line-height:17px;"><span style="color:#b0b0b0"><span style="font-family:'Liberation Sans';font-size:17px;letter-spacing:0.545px;line-height:0">00</span>4<span style="font-family:'Liberation Sans';font-size:17px;letter-spacing:0.545px;line-height:0">0</span>1<span style="font-family:'Liberation Sans';font-size:17px;letter-spacing:0.545px;line-height:0">0</span>45</span></div>
<div class="clip" style="left:286px;top:221px;width:247px;height:17px"><div class="m" style="left:35px;top:0;line-height:17px">A1 CA2<span style="font-family:'Liberation Sans';font-size:17px;letter-spacing:0.545px;line-height:0">0</span>4<span style="font-family:'Liberation Sans';font-size:17px;letter-spacing:0.545px;line-height:0">000</span></div><div class="b" style="left:65px;top:16px;width:80px;height:1px;background:#d84848"></div></div>
<div class="clip" style="left:534px;top:221px;width:399px;height:17px"><div class="m" style="left:3px;top:0;line-height:17px"><span style="color:#8f9cf0">mov</span> <span style="color:#a88ef0">eax</span><span style="color:#e0e0e0">,dword ptr </span><span style="color:#a88ef0">ds</span><span style="color:#e0e0e0">:[</span><span style="color:#f08c78">4<span style="font-family:'Liberation Sans';font-size:17px;letter-spacing:0.545px;line-height:0">0</span>2<span style="font-family:'Liberation Sans';font-size:17px;letter-spacing:0.545px;line-height:0">0</span>CA</span><span style="color:#e0e0e0">]</span></div></div>
<div class="m" style="left:202px;top:238px;line-height:17px;"><span style="color:#b0b0b0"><span style="font-family:'Liberation Sans';font-size:17px;letter-spacing:0.545px;line-height:0">00</span>4<span style="font-family:'Liberation Sans';font-size:17px;letter-spacing:0.545px;line-height:0">0</span>1<span style="font-family:'Liberation Sans';font-size:17px;letter-spacing:0.545px;line-height:0">0</span>4A</span></div>
<div class="clip" style="left:286px;top:238px;width:247px;height:17px"><div class="m" style="left:35px;top:0;line-height:17px">A3 742<span style="font-family:'Liberation Sans';font-size:17px;letter-spacing:0.545px;line-height:0">0</span>4<span style="font-family:'Liberation Sans';font-size:17px;letter-spacing:0.545px;line-height:0">000</span></div><div class="b" style="left:65px;top:16px;width:80px;height:1px;background:#d84848"></div></div>
<div class="clip" style="left:534px;top:238px;width:399px;height:17px"><div class="m" style="left:3px;top:0;line-height:17px"><span style="color:#8f9cf0">mov</span><span style="color:#e0e0e0"> dword ptr </span><span style="color:#a88ef0">ds</span><span style="color:#e0e0e0">:[</span><span style="color:#f08c78">4<span style="font-family:'Liberation Sans';font-size:17px;letter-spacing:0.545px;line-height:0">0</span>2<span style="font-family:'Liberation Sans';font-size:17px;letter-spacing:0.545px;line-height:0">0</span>74</span><span style="color:#e0e0e0">],</span><span style="color:#a88ef0">eax</span></div></div>
<div class="m" style="left:202px;top:255px;line-height:17px;"><span style="color:#b0b0b0"><span style="font-family:'Liberation Sans';font-size:17px;letter-spacing:0.545px;line-height:0">00</span>4<span style="font-family:'Liberation Sans';font-size:17px;letter-spacing:0.545px;line-height:0">0</span>1<span style="font-family:'Liberation Sans';font-size:17px;letter-spacing:0.545px;line-height:0">0</span>4F</span></div>
<div class="clip" style="left:286px;top:255px;width:247px;height:17px"><div class="m" style="left:35px;top:0;line-height:17px">6A 64</div></div>
<div class="clip" style="left:534px;top:255px;width:399px;height:17px"><div class="m" style="left:3px;top:0;line-height:17px"><span style="color:#8f9cf0">push</span> <span style="color:#f08c78">64</span></div></div>
<div class="m" style="left:202px;top:272px;line-height:17px;"><span style="color:#b0b0b0"><span style="font-family:'Liberation Sans';font-size:17px;letter-spacing:0.545px;line-height:0">00</span>4<span style="font-family:'Liberation Sans';font-size:17px;letter-spacing:0.545px;line-height:0">0</span>1<span style="font-family:'Liberation Sans';font-size:17px;letter-spacing:0.545px;line-height:0">0</span>51</span></div>
<div class="clip" style="left:286px;top:272px;width:247px;height:17px"><div class="m" style="left:35px;top:0;line-height:17px">5<span style="font-family:'Liberation Sans';font-size:17px;letter-spacing:0.545px;line-height:0">0</span></div></div>
<div class="clip" style="left:534px;top:272px;width:399px;height:17px"><div class="m" style="left:3px;top:0;line-height:17px"><span style="color:#8f9cf0">push</span> <span style="color:#a88ef0">eax</span></div></div>
<div class="m" style="left:202px;top:289px;line-height:17px;"><span style="color:#b0b0b0"><span style="font-family:'Liberation Sans';font-size:17px;letter-spacing:0.545px;line-height:0">00</span>4<span style="font-family:'Liberation Sans';font-size:17px;letter-spacing:0.545px;line-height:0">0</span>1<span style="font-family:'Liberation Sans';font-size:17px;letter-spacing:0.545px;line-height:0">0</span>52</span></div>
<div class="clip" style="left:286px;top:289px;width:247px;height:17px"><div class="m" style="left:35px;top:0;line-height:17px">E8 A1<span style="font-family:'Liberation Sans';font-size:17px;letter-spacing:0.545px;line-height:0">0</span>3<span style="font-family:'Liberation Sans';font-size:17px;letter-spacing:0.545px;line-height:0">0000</span></div></div>
<div class="clip" style="left:534px;top:289px;width:399px;height:17px"><div class="m" style="left:3px;top:0;line-height:17px"><span style="color:#e87482">call</span> <span style="color:#f08c78">&lt;JMP.&amp;LoadIconA&gt;</span></div></div>
<div class="m" style="left:202px;top:306px;line-height:17px;"><span style="color:#b0b0b0"><span style="font-family:'Liberation Sans';font-size:17px;letter-spacing:0.545px;line-height:0">00</span>4<span style="font-family:'Liberation Sans';font-size:17px;letter-spacing:0.545px;line-height:0">0</span>1<span style="font-family:'Liberation Sans';font-size:17px;letter-spacing:0.545px;line-height:0">0</span>57</span></div>
<div class="clip" style="left:286px;top:306px;width:247px;height:17px"><div class="m" style="left:35px;top:0;line-height:17px">A3 782<span style="font-family:'Liberation Sans';font-size:17px;letter-spacing:0.545px;line-height:0">0</span>4<span style="font-family:'Liberation Sans';font-size:17px;letter-spacing:0.545px;line-height:0">000</span></div><div class="b" style="left:65px;top:16px;width:80px;height:1px;background:#d84848"></div></div>
<div class="clip" style="left:534px;top:306px;width:399px;height:17px"><div class="m" style="left:3px;top:0;line-height:17px"><span style="color:#8f9cf0">mov</span><span style="color:#e0e0e0"> dword ptr </span><span style="color:#a88ef0">ds</span><span style="color:#e0e0e0">:[</span><span style="color:#f08c78">4<span style="font-family:'Liberation Sans';font-size:17px;letter-spacing:0.545px;line-height:0">0</span>2<span style="font-family:'Liberation Sans';font-size:17px;letter-spacing:0.545px;line-height:0">0</span>78</span><span style="color:#e0e0e0">],</span><span style="color:#a88ef0">eax</span></div></div>
<div class="m" style="left:202px;top:323px;line-height:17px;"><span style="color:#b0b0b0"><span style="font-family:'Liberation Sans';font-size:17px;letter-spacing:0.545px;line-height:0">00</span>4<span style="font-family:'Liberation Sans';font-size:17px;letter-spacing:0.545px;line-height:0">0</span>1<span style="font-family:'Liberation Sans';font-size:17px;letter-spacing:0.545px;line-height:0">0</span>5C</span></div>
<div class="clip" style="left:286px;top:323px;width:247px;height:17px"><div class="m" style="left:35px;top:0;line-height:17px">68 <span style="font-family:'Liberation Sans';font-size:17px;letter-spacing:0.545px;line-height:0">00</span>7F<span style="font-family:'Liberation Sans';font-size:17px;letter-spacing:0.545px;line-height:0">0000</span></div></div>
<div class="clip" style="left:534px;top:323px;width:399px;height:17px"><div class="m" style="left:3px;top:0;line-height:17px"><span style="color:#8f9cf0">push</span> <span style="color:#f08c78">7F<span style="font-family:'Liberation Sans';font-size:17px;letter-spacing:0.545px;line-height:0">00</span></span></div></div>
<div class="m" style="left:202px;top:340px;line-height:17px;"><span style="color:#b0b0b0"><span style="font-family:'Liberation Sans';font-size:17px;letter-spacing:0.545px;line-height:0">00</span>4<span style="font-family:'Liberation Sans';font-size:17px;letter-spacing:0.545px;line-height:0">0</span>1<span style="font-family:'Liberation Sans';font-size:17px;letter-spacing:0.545px;line-height:0">0</span>61</span></div>
<div class="clip" style="left:286px;top:340px;width:247px;height:17px"><div class="m" style="left:35px;top:0;line-height:17px">6A <span style="font-family:'Liberation Sans';font-size:17px;letter-spacing:0.545px;line-height:0">00</span></div></div>
<div class="clip" style="left:534px;top:340px;width:399px;height:17px"><div class="m" style="left:3px;top:0;line-height:17px"><span style="color:#8f9cf0">push</span> <span style="color:#f08c78"><span style="font-family:'Liberation Sans';font-size:17px;letter-spacing:0.545px;line-height:0">0</span></span></div></div>
<div class="m" style="left:202px;top:357px;line-height:17px;"><span style="color:#b0b0b0"><span style="font-family:'Liberation Sans';font-size:17px;letter-spacing:0.545px;line-height:0">00</span>4<span style="font-family:'Liberation Sans';font-size:17px;letter-spacing:0.545px;line-height:0">0</span>1<span style="font-family:'Liberation Sans';font-size:17px;letter-spacing:0.545px;line-height:0">0</span>63</span></div>
<div class="clip" style="left:286px;top:357px;width:247px;height:17px"><div class="m" style="left:35px;top:0;line-height:17px">E8 72<span style="font-family:'Liberation Sans';font-size:17px;letter-spacing:0.545px;line-height:0">0</span>3<span style="font-family:'Liberation Sans';font-size:17px;letter-spacing:0.545px;line-height:0">0000</span></div></div>
<div class="clip" style="left:534px;top:357px;width:399px;height:17px"><div class="m" style="left:3px;top:0;line-height:17px"><span style="color:#e87482">call</span> <span style="color:#f08c78">&lt;JMP.&amp;LoadCursorA&gt;</span></div></div>
<div class="m" style="left:202px;top:374px;line-height:17px;"><span style="color:#b0b0b0"><span style="font-family:'Liberation Sans';font-size:17px;letter-spacing:0.545px;line-height:0">00</span>4<span style="font-family:'Liberation Sans';font-size:17px;letter-spacing:0.545px;line-height:0">0</span>1<span style="font-family:'Liberation Sans';font-size:17px;letter-spacing:0.545px;line-height:0">0</span>68</span></div>
<div class="clip" style="left:286px;top:374px;width:247px;height:17px"><div class="m" style="left:35px;top:0;line-height:17px">A3 7C2<span style="font-family:'Liberation Sans';font-size:17px;letter-spacing:0.545px;line-height:0">0</span>4<span style="font-family:'Liberation Sans';font-size:17px;letter-spacing:0.545px;line-height:0">000</span></div><div class="b" style="left:65px;top:16px;width:80px;height:1px;background:#d84848"></div></div>
<div class="clip" style="left:534px;top:374px;width:399px;height:17px"><div class="m" style="left:3px;top:0;line-height:17px"><span style="color:#8f9cf0">mov</span><span style="color:#e0e0e0"> dword ptr </span><span style="color:#a88ef0">ds</span><span style="color:#e0e0e0">:[</span><span style="color:#f08c78">4<span style="font-family:'Liberation Sans';font-size:17px;letter-spacing:0.545px;line-height:0">0</span>2<span style="font-family:'Liberation Sans';font-size:17px;letter-spacing:0.545px;line-height:0">0</span>7C</span><span style="color:#e0e0e0">],</span><span style="color:#a88ef0">eax</span></div></div>
<div class="m" style="left:202px;top:391px;line-height:17px;"><span style="color:#b0b0b0"><span style="font-family:'Liberation Sans';font-size:17px;letter-spacing:0.545px;line-height:0">00</span>4<span style="font-family:'Liberation Sans';font-size:17px;letter-spacing:0.545px;line-height:0">0</span>1<span style="font-family:'Liberation Sans';font-size:17px;letter-spacing:0.545px;line-height:0">0</span>6D</span></div>
<div class="clip" style="left:286px;top:391px;width:247px;height:17px"><div class="m" style="left:35px;top:0;line-height:17px">C7<span style="font-family:'Liberation Sans';font-size:17px;letter-spacing:0.545px;line-height:0">0</span>5 8<span style="font-family:'Liberation Sans';font-size:17px;letter-spacing:0.545px;line-height:0">0</span>2<span style="font-family:'Liberation Sans';font-size:17px;letter-spacing:0.545px;line-height:0">0</span>4<span style="font-family:'Liberation Sans';font-size:17px;letter-spacing:0.545px;line-height:0">000</span> <span style="font-family:'Liberation Sans';font-size:17px;letter-spacing:0.545px;line-height:0">0</span>5<span style="font-family:'Liberation Sans';font-size:17px;letter-spacing:0.545px;line-height:0">000000</span></div><div class="b" style="left:85px;top:16px;width:80px;height:1px;background:#d84848"></div></div>
<div class="clip" style="left:534px;top:391px;width:399px;height:17px"><div class="m" style="left:3px;top:0;line-height:17px"><span style="color:#8f9cf0">mov</span><span style="color:#e0e0e0"> dword ptr </span><span style="color:#a88ef0">ds</span><span style="color:#e0e0e0">:[</span><span style="color:#f08c78">4<span style="font-family:'Liberation Sans';font-size:17px;letter-spacing:0.545px;line-height:0">0</span>2<span style="font-family:'Liberation Sans';font-size:17px;letter-spacing:0.545px;line-height:0">0</span>8<span style="font-family:'Liberation Sans';font-size:17px;letter-spacing:0.545px;line-height:0">0</span></span><span style="color:#e0e0e0">],</span><span style="color:#f08c78">5</span></div></div>
<div class="m" style="left:202px;top:408px;line-height:17px;"><span style="color:#b0b0b0"><span style="font-family:'Liberation Sans';font-size:17px;letter-spacing:0.545px;line-height:0">00</span>4<span style="font-family:'Liberation Sans';font-size:17px;letter-spacing:0.545px;line-height:0">0</span>1<span style="font-family:'Liberation Sans';font-size:17px;letter-spacing:0.545px;line-height:0">0</span>77</span></div>
<div class="clip" style="left:286px;top:408px;width:247px;height:17px"><div class="m" style="left:35px;top:0;line-height:17px">C7<span style="font-family:'Liberation Sans';font-size:17px;letter-spacing:0.545px;line-height:0">0</span>5 842<span style="font-family:'Liberation Sans';font-size:17px;letter-spacing:0.545px;line-height:0">0</span>4<span style="font-family:'Liberation Sans';font-size:17px;letter-spacing:0.545px;line-height:0">000</span> FF2<span style="font-family:'Liberation Sans';font-size:17px;letter-spacing:0.545px;line-height:0">0</span>4<span style="font-family:'Liberation Sans';font-size:17px;letter-spacing:0.545px;line-height:0">000</span></div><div class="b" style="left:85px;top:16px;width:80px;height:1px;background:#d84848"></div><div class="b" style="left:175px;top:16px;width:80px;height:1px;background:#d84848"></div></div>
<div class="clip" style="left:534px;top:408px;width:399px;height:17px"><div class="m" style="left:3px;top:0;line-height:17px"><span style="color:#8f9cf0">mov</span><span style="color:#e0e0e0"> dword ptr </span><span style="color:#a88ef0">ds</span><span style="color:#e0e0e0">:[</span><span style="color:#f08c78">4<span style="font-family:'Liberation Sans';font-size:17px;letter-spacing:0.545px;line-height:0">0</span>2<span style="font-family:'Liberation Sans';font-size:17px;letter-spacing:0.545px;line-height:0">0</span>84</span><span style="color:#e0e0e0">],</span><span style="color:#f08c78">crackme2.4<span style="font-family:'Liberation Sans';font-size:17px;letter-spacing:0.545px;line-height:0">0</span>2<span style="font-family:'Liberation Sans';font-size:17px;letter-spacing:0.545px;line-height:0">0</span>FF</span></div></div>
<div class="m" style="left:937px;top:408px;line-height:17px;"><span style="color:#b0b0b0">4<span style="font-family:'Liberation Sans';font-size:17px;letter-spacing:0.545px;line-height:0">0</span>2<span style="font-family:'Liberation Sans';font-size:17px;letter-spacing:0.545px;line-height:0">0</span>FF:"MENU"</span></div>
<div class="m" style="left:202px;top:425px;line-height:17px;"><span style="color:#b0b0b0"><span style="font-family:'Liberation Sans';font-size:17px;letter-spacing:0.545px;line-height:0">00</span>4<span style="font-family:'Liberation Sans';font-size:17px;letter-spacing:0.545px;line-height:0">0</span>1<span style="font-family:'Liberation Sans';font-size:17px;letter-spacing:0.545px;line-height:0">0</span>81</span></div>
<div class="clip" style="left:286px;top:425px;width:247px;height:17px"><div class="m" style="left:35px;top:0;line-height:17px">C7<span style="font-family:'Liberation Sans';font-size:17px;letter-spacing:0.545px;line-height:0">0</span>5 882<span style="font-family:'Liberation Sans';font-size:17px;letter-spacing:0.545px;line-height:0">0</span>4<span style="font-family:'Liberation Sans';font-size:17px;letter-spacing:0.545px;line-height:0">000</span> E32<span style="font-family:'Liberation Sans';font-size:17px;letter-spacing:0.545px;line-height:0">0</span>4<span style="font-family:'Liberation Sans';font-size:17px;letter-spacing:0.545px;line-height:0">000</span></div><div class="b" style="left:85px;top:16px;width:80px;height:1px;background:#d84848"></div><div class="b" style="left:175px;top:16px;width:80px;height:1px;background:#d84848"></div></div>
<div class="clip" style="left:534px;top:425px;width:399px;height:17px"><div class="m" style="left:3px;top:0;line-height:17px"><span style="color:#8f9cf0">mov</span><span style="color:#e0e0e0"> dword ptr </span><span style="color:#a88ef0">ds</span><span style="color:#e0e0e0">:[</span><span style="color:#f08c78">4<span style="font-family:'Liberation Sans';font-size:17px;letter-spacing:0.545px;line-height:0">0</span>2<span style="font-family:'Liberation Sans';font-size:17px;letter-spacing:0.545px;line-height:0">0</span>88</span><span style="color:#e0e0e0">],</span><span style="color:#f08c78">crackme2.4<span style="font-family:'Liberation Sans';font-size:17px;letter-spacing:0.545px;line-height:0">0</span>2<span style="font-family:'Liberation Sans';font-size:17px;letter-spacing:0.545px;line-height:0">0</span>E3</span></div></div>
<div class="m" style="left:937px;top:425px;line-height:17px;"><span style="color:#b0b0b0">4<span style="font-family:'Liberation Sans';font-size:17px;letter-spacing:0.545px;line-height:0">0</span>2<span style="font-family:'Liberation Sans';font-size:17px;letter-spacing:0.545px;line-height:0">0</span>E3:"No need to disasm the code!"</span></div>
<div class="m" style="left:202px;top:442px;line-height:17px;"><span style="color:#b0b0b0"><span style="font-family:'Liberation Sans';font-size:17px;letter-spacing:0.545px;line-height:0">00</span>4<span style="font-family:'Liberation Sans';font-size:17px;letter-spacing:0.545px;line-height:0">0</span>1<span style="font-family:'Liberation Sans';font-size:17px;letter-spacing:0.545px;line-height:0">0</span>8B</span></div>
<div class="clip" style="left:286px;top:442px;width:247px;height:17px"><div class="m" style="left:35px;top:0;line-height:17px">68 642<span style="font-family:'Liberation Sans';font-size:17px;letter-spacing:0.545px;line-height:0">0</span>4<span style="font-family:'Liberation Sans';font-size:17px;letter-spacing:0.545px;line-height:0">000</span></div><div class="b" style="left:65px;top:16px;width:80px;height:1px;background:#d84848"></div></div>
<div class="clip" style="left:534px;top:442px;width:399px;height:17px"><div class="m" style="left:3px;top:0;line-height:17px"><span style="color:#8f9cf0">push</span> <span style="color:#f08c78">crackme2.4<span style="font-family:'Liberation Sans';font-size:17px;letter-spacing:0.545px;line-height:0">0</span>2<span style="font-family:'Liberation Sans';font-size:17px;letter-spacing:0.545px;line-height:0">0</span>64</span></div></div>
<div class="m" style="left:202px;top:459px;line-height:17px;"><span style="color:#b0b0b0"><span style="font-family:'Liberation Sans';font-size:17px;letter-spacing:0.545px;line-height:0">00</span>4<span style="font-family:'Liberation Sans';font-size:17px;letter-spacing:0.545px;line-height:0">0</span>1<span style="font-family:'Liberation Sans';font-size:17px;letter-spacing:0.545px;line-height:0">0</span>9<span style="font-family:'Liberation Sans';font-size:17px;letter-spacing:0.545px;line-height:0">0</span></span></div>
<div class="clip" style="left:286px;top:459px;width:247px;height:17px"><div class="m" style="left:35px;top:0;line-height:17px">E8 C3<span style="font-family:'Liberation Sans';font-size:17px;letter-spacing:0.545px;line-height:0">0</span>3<span style="font-family:'Liberation Sans';font-size:17px;letter-spacing:0.545px;line-height:0">0000</span></div></div>
<div class="clip" style="left:534px;top:459px;width:399px;height:17px"><div class="m" style="left:3px;top:0;line-height:17px"><span style="color:#e87482">call</span> <span style="color:#f08c78">&lt;JMP.&amp;RegisterClassA&gt;</span></div></div>
<div class="m" style="left:202px;top:476px;line-height:17px;"><span style="color:#b0b0b0"><span style="font-family:'Liberation Sans';font-size:17px;letter-spacing:0.545px;line-height:0">00</span>4<span style="font-family:'Liberation Sans';font-size:17px;letter-spacing:0.545px;line-height:0">0</span>1<span style="font-family:'Liberation Sans';font-size:17px;letter-spacing:0.545px;line-height:0">0</span>95</span></div>
<div class="clip" style="left:286px;top:476px;width:247px;height:17px"><div class="m" style="left:35px;top:0;line-height:17px">6A <span style="font-family:'Liberation Sans';font-size:17px;letter-spacing:0.545px;line-height:0">00</span></div></div>
<div class="clip" style="left:534px;top:476px;width:399px;height:17px"><div class="m" style="left:3px;top:0;line-height:17px"><span style="color:#8f9cf0">push</span> <span style="color:#f08c78"><span style="font-family:'Liberation Sans';font-size:17px;letter-spacing:0.545px;line-height:0">0</span></span></div></div>
<div class="m" style="left:202px;top:493px;line-height:17px;"><span style="color:#b0b0b0"><span style="font-family:'Liberation Sans';font-size:17px;letter-spacing:0.545px;line-height:0">00</span>4<span style="font-family:'Liberation Sans';font-size:17px;letter-spacing:0.545px;line-height:0">0</span>1<span style="font-family:'Liberation Sans';font-size:17px;letter-spacing:0.545px;line-height:0">0</span>97</span></div>
<div class="clip" style="left:286px;top:493px;width:247px;height:17px"><div class="m" style="left:35px;top:0;line-height:17px">FF35 CA2<span style="font-family:'Liberation Sans';font-size:17px;letter-spacing:0.545px;line-height:0">0</span>4<span style="font-family:'Liberation Sans';font-size:17px;letter-spacing:0.545px;line-height:0">000</span></div><div class="b" style="left:85px;top:16px;width:80px;height:1px;background:#d84848"></div></div>
<div class="clip" style="left:534px;top:493px;width:399px;height:17px"><div class="m" style="left:3px;top:0;line-height:17px"><span style="color:#8f9cf0">push</span><span style="color:#e0e0e0"> dword ptr </span><span style="color:#a88ef0">ds</span><span style="color:#e0e0e0">:[</span><span style="color:#f08c78">4<span style="font-family:'Liberation Sans';font-size:17px;letter-spacing:0.545px;line-height:0">0</span>2<span style="font-family:'Liberation Sans';font-size:17px;letter-spacing:0.545px;line-height:0">0</span>CA</span><span style="color:#e0e0e0">]</span></div></div>
</div>
<div class="b" style="left:185px;top:136px;width:11px;height:11px;overflow:hidden"><div style="width:11px;height:11px;border-radius:6px;background:#444"></div></div>
<div class="b" style="left:185px;top:153px;width:11px;height:11px;overflow:hidden"><div style="width:11px;height:11px;border-radius:6px;background:#444"></div></div>
<div class="b" style="left:185px;top:170px;width:11px;height:11px;overflow:hidden"><div style="width:11px;height:11px;border-radius:6px;background:#444"></div></div>
<div class="b" style="left:185px;top:187px;width:11px;height:11px;overflow:hidden"><div style="width:11px;height:11px;border-radius:6px;background:#444"></div></div>
<div class="b" style="left:185px;top:204px;width:11px;height:11px;overflow:hidden"><div style="width:11px;height:11px;border-radius:6px;background:#444"></div></div>
<div class="b" style="left:185px;top:221px;width:11px;height:11px;overflow:hidden"><div style="width:11px;height:11px;border-radius:6px;background:#444"></div></div>
<div class="b" style="left:185px;top:238px;width:11px;height:11px;overflow:hidden"><div style="width:11px;height:11px;border-radius:6px;background:#444"></div></div>
<div class="b" style="left:185px;top:255px;width:11px;height:11px;overflow:hidden"><div style="width:11px;height:11px;border-radius:6px;background:#444"></div></div>
<div class="b" style="left:185px;top:272px;width:11px;height:11px;overflow:hidden"><div style="width:11px;height:11px;border-radius:6px;background:#444"></div></div>
<div class="b" style="left:185px;top:289px;width:11px;height:11px;overflow:hidden"><div style="width:11px;height:11px;border-radius:6px;background:#444"></div></div>
<div class="b" style="left:185px;top:306px;width:11px;height:11px;overflow:hidden"><div style="width:11px;height:11px;border-radius:6px;background:#444"></div></div>
<div class="b" style="left:185px;top:323px;width:11px;height:11px;overflow:hidden"><div style="width:11px;height:11px;border-radius:6px;background:#444"></div></div>
<div class="b" style="left:185px;top:340px;width:11px;height:11px;overflow:hidden"><div style="width:11px;height:11px;border-radius:6px;background:#444"></div></div>
<div class="b" style="left:185px;top:357px;width:11px;height:11px;overflow:hidden"><div style="width:11px;height:11px;border-radius:6px;background:#444"></div></div>
<div class="b" style="left:185px;top:374px;width:11px;height:11px;overflow:hidden"><div style="width:11px;height:11px;border-radius:6px;background:#444"></div></div>
<div class="b" style="left:185px;top:391px;width:11px;height:11px;overflow:hidden"><div style="width:11px;height:11px;border-radius:6px;background:#444"></div></div>
<div class="b" style="left:185px;top:408px;width:11px;height:11px;overflow:hidden"><div style="width:11px;height:11px;border-radius:6px;background:#444"></div></div>
<div class="b" style="left:185px;top:425px;width:11px;height:11px;overflow:hidden"><div style="width:11px;height:11px;border-radius:6px;background:#444"></div></div>
<div class="b" style="left:185px;top:442px;width:11px;height:11px;overflow:hidden"><div style="width:11px;height:11px;border-radius:6px;background:#444"></div></div>
<div class="b" style="left:185px;top:459px;width:11px;height:11px;overflow:hidden"><div style="width:11px;height:11px;border-radius:6px;background:#444"></div></div>
<div class="b" style="left:185px;top:476px;width:11px;height:11px;overflow:hidden"><div style="width:11px;height:11px;border-radius:6px;background:#444"></div></div>
<div class="b" style="left:185px;top:493px;width:11px;height:11px;overflow:hidden"><div style="width:11px;height:11px;border-radius:6px;background:#444"></div></div>
<div class="b" style="left:185px;top:510px;width:11px;height:11px;overflow:hidden"><div style="width:11px;height:11px;border-radius:6px;background:#444"></div></div>
<div class="b" style="left:185px;top:527px;width:11px;height:11px;overflow:hidden"><div style="width:11px;height:11px;border-radius:6px;background:#444"></div></div>
<div class="b" style="left:185px;top:544px;width:11px;height:11px;overflow:hidden"><div style="width:11px;height:11px;border-radius:6px;background:#444"></div></div>
<div class="b" style="left:185px;top:561px;width:11px;height:11px;overflow:hidden"><div style="width:11px;height:11px;border-radius:6px;background:#444"></div></div>
<div class="b" style="left:185px;top:578px;width:11px;height:11px;overflow:hidden"><div style="width:11px;height:11px;border-radius:6px;background:#444"></div></div>
<div class="b" style="left:185px;top:595px;width:11px;height:11px;overflow:hidden"><div style="width:11px;height:11px;border-radius:6px;background:#444"></div></div>
<div class="b" style="left:185px;top:612px;width:11px;height:11px;overflow:hidden"><div style="width:11px;height:11px;border-radius:6px;background:#444"></div></div>
<svg style="left:150px;top:238px" width="40" height="45"><path d="M34 5.5 H2.5 V39.5 H34" fill="none" stroke="#a0a0a0" stroke-dasharray="3,2"/><path d="M30 36 L34 39.5 L30 43" fill="none" stroke="#a0a0a0"/></svg>
<svg style="left:304px;top:241px" width="8" height="6"><path d="M1 1 L4 4 L7 1" stroke="#c03040" fill="none"/></svg>
<svg style="left:1438px;top:120px" width="10" height="8"><path d="M1 7 L5 1 L9 7 Z" fill="#9a9a9a"/></svg>
<div class="b" style="left:1438px;top:131px;width:10px;height:470px;background:#3a3a3a;border-radius:5px"></div>
<div class="b" style="left:1438px;top:132px;width:10px;height:52px;background:#6e6e6e;border-radius:5px"></div>
<svg style="left:1438px;top:604px" width="10" height="8"><path d="M1 1 L5 7 L9 1 Z" fill="#9a9a9a"/></svg>
<svg style="left:201px;top:622px" width="8" height="10"><path d="M7 1 L1 5 L7 9 Z" fill="#9a9a9a"/></svg>
<div class="b" style="left:211px;top:622px;width:1210px;height:10px;background:#3a3a3a;border-radius:5px"></div>
<div class="b" style="left:215px;top:622px;width:678px;height:10px;background:#6e6e6e;border-radius:5px"></div>
<svg style="left:1423px;top:622px" width="8" height="10"><path d="M1 1 L7 5 L1 9 Z" fill="#9a9a9a"/></svg>
<div class="b" style="left:0px;top:636px;width:1454px;height:1px;background:#4a4a4a;"></div>
<div class="b" style="left:1453px;top:115px;width:1px;height:597px;background:#4a4a4a;"></div>
<div class="t" style="left:6px;top:638px;color:#e0e0e0;font-size:16px;font-family:'Liberation Sans',sans-serif;line-height:20px;letter-spacing:1px">跳转不会执行</div>
<div class="m" style="left:6px;top:657px;line-height:17px;"><span style="color:#e0e0e0">crackme2.<span style="font-family:'Liberation Sans';font-size:17px;letter-spacing:0.545px;line-height:0">00</span>4<span style="font-family:'Liberation Sans';font-size:17px;letter-spacing:0.545px;line-height:0">0</span>132D</span></div>
<div class="m" style="left:6px;top:691px;line-height:17px;"><span style="color:#e0e0e0">CODE:<span style="font-family:'Liberation Sans';font-size:17px;letter-spacing:0.545px;line-height:0">00</span>4<span style="font-family:'Liberation Sans';font-size:17px;letter-spacing:0.545px;line-height:0">0</span>131A crackme2.exe:$131A #91A &lt;sub_4<span style="font-family:'Liberation Sans';font-size:17px;letter-spacing:0.545px;line-height:0">0</span>12F1+29&gt;</span></div>
<div class="b" style="left:0px;top:712px;width:1162px;height:1px;background:#4a4a4a;"></div>
<div class="b" style="left:1455px;top:115px;width:464px;height:30px;border:1px solid #333;box-sizing:border-box"></div>
<div class="t" style="left:1455px;top:120px;width:465px;text-align:center;color:#e8e8e8;font-size:16px;line-height:20px;font-family:'Liberation Sans',sans-serif">隐藏FPU</div>
<div class="m" style="left:1465px;top:152px;line-height:18px;"><span style="color:#aca4f0">EAX</span></div>
<div class="m" style="left:1525px;top:152px;line-height:18px;"><span style="color:#f08c78"><span style="font-family:'Liberation Sans';font-size:17px;letter-spacing:0.545px;line-height:0">00</span>19FFCC</span></div>
<div class="m" style="left:1465px;top:170px;line-height:18px;"><span style="color:#aca4f0">EBX</span></div>
<div class="m" style="left:1525px;top:170px;line-height:18px;"><span style="color:#e0e0e0"><span style="font-family:'Liberation Sans';font-size:17px;letter-spacing:0.545px;line-height:0">00</span>2<span style="font-family:'Liberation Sans';font-size:17px;letter-spacing:0.545px;line-height:0">0</span>7<span style="font-family:'Liberation Sans';font-size:17px;letter-spacing:0.545px;line-height:0">000</span></span></div>
<div class="m" style="left:1465px;top:188px;line-height:18px;"><span style="color:#aca4f0">ECX</span></div>
<div class="m" style="left:1525px;top:188px;line-height:18px;"><span style="color:#f08c78"><span style="font-family:'Liberation Sans';font-size:17px;letter-spacing:0.545px;line-height:0">00</span>4<span style="font-family:'Liberation Sans';font-size:17px;letter-spacing:0.545px;line-height:0">0</span>1<span style="font-family:'Liberation Sans';font-size:17px;letter-spacing:0.545px;line-height:0">000</span></span></div>
<div class="m" style="left:1656px;top:188px;line-height:18px;"><span style="color:#e8708e">"j"</span></div>
<div class="m" style="left:1465px;top:206px;line-height:18px;"><span style="color:#aca4f0">EDX</span></div>
<div class="m" style="left:1525px;top:206px;line-height:18px;"><span style="color:#f08c78"><span style="font-family:'Liberation Sans';font-size:17px;letter-spacing:0.545px;line-height:0">00</span>4<span style="font-family:'Liberation Sans';font-size:17px;letter-spacing:0.545px;line-height:0">0</span>1<span style="font-family:'Liberation Sans';font-size:17px;letter-spacing:0.545px;line-height:0">000</span></span></div>
<div class="m" style="left:1656px;top:206px;line-height:18px;"><span style="color:#e8708e">"j"</span></div>
<div class="m" style="left:1465px;top:224px;line-height:18px;"><span style="color:#aca4f0">EBP</span></div>
<div class="m" style="left:1525px;top:224px;line-height:18px;"><span style="color:#f08c78"><span style="font-family:'Liberation Sans';font-size:17px;letter-spacing:0.545px;line-height:0">00</span>19FF8<span style="font-family:'Liberation Sans';font-size:17px;letter-spacing:0.545px;line-height:0">0</span></span></div>
<div class="m" style="left:1465px;top:242px;line-height:18px;"><span style="color:#aca4f0">ESP</span></div>
<div class="m" style="left:1525px;top:242px;line-height:18px;"><span style="color:#f08c78"><span style="font-family:'Liberation Sans';font-size:17px;letter-spacing:0.545px;line-height:0">00</span>19FF74</span></div>
<div class="m" style="left:1656px;top:242px;line-height:18px;"><span style="color:#e8708e">"YcLu"</span></div>
<div class="m" style="left:1465px;top:260px;line-height:18px;"><span style="color:#aca4f0">ESI</span></div>
<div class="m" style="left:1525px;top:260px;line-height:18px;"><span style="color:#f08c78"><span style="font-family:'Liberation Sans';font-size:17px;letter-spacing:0.545px;line-height:0">00</span>4<span style="font-family:'Liberation Sans';font-size:17px;letter-spacing:0.545px;line-height:0">0</span>1<span style="font-family:'Liberation Sans';font-size:17px;letter-spacing:0.545px;line-height:0">000</span></span></div>
<div class="m" style="left:1656px;top:260px;line-height:18px;"><span style="color:#e8708e">"j"</span></div>
<div class="m" style="left:1465px;top:278px;line-height:18px;"><span style="color:#aca4f0">EDI</span></div>
<div class="m" style="left:1525px;top:278px;line-height:18px;"><span style="color:#f08c78"><span style="font-family:'Liberation Sans';font-size:17px;letter-spacing:0.545px;line-height:0">00</span>4<span style="font-family:'Liberation Sans';font-size:17px;letter-spacing:0.545px;line-height:0">0</span>1<span style="font-family:'Liberation Sans';font-size:17px;letter-spacing:0.545px;line-height:0">000</span></span></div>
<div class="m" style="left:1656px;top:278px;line-height:18px;"><span style="color:#e8708e">"j"</span></div>
<div class="m" style="left:1465px;top:314px;line-height:18px;"><span style="color:#aca4f0">EIP</span></div>
<div class="m" style="left:1525px;top:314px;line-height:18px;"><span style="color:#f08c78"><span style="font-family:'Liberation Sans';font-size:17px;letter-spacing:0.545px;line-height:0">00</span>4<span style="font-family:'Liberation Sans';font-size:17px;letter-spacing:0.545px;line-height:0">0</span>1<span style="font-family:'Liberation Sans';font-size:17px;letter-spacing:0.545px;line-height:0">000</span></span></div>
<div class="m" style="left:1656px;top:314px;line-height:18px;"><span style="color:#e8708e">&lt;crackme2.EntryPoint&gt;</span></div>
<div class="m" style="left:1465px;top:350px;line-height:18px;"><span style="color:#aca4f0">EFLAGS</span></div>
<div class="m" style="left:1555px;top:350px;line-height:18px;"><span style="color:#f08c78"><span style="font-family:'Liberation Sans';font-size:17px;letter-spacing:0.545px;line-height:0">00000</span>244</span></div>
<div class="m" style="left:1465px;top:368px;line-height:18px;"><span style="color:#aca4f0">ZF</span></div>
<div class="m" style="left:1495px;top:368px;line-height:18px;"><span style="color:#e0e0e0">1</span></div>
<div class="m" style="left:1525px;top:368px;line-height:18px;"><span style="color:#aca4f0">PF</span></div>
<div class="m" style="left:1555px;top:368px;line-height:18px;"><span style="color:#e0e0e0">1</span></div>
<div class="m" style="left:1585px;top:368px;line-height:18px;"><span style="color:#aca4f0">AF</span></div>
<div class="m" style="left:1615px;top:368px;line-height:18px;"><span style="color:#e0e0e0"><span style="font-family:'Liberation Sans';font-size:17px;letter-spacing:0.545px;line-height:0">0</span></span></div>
<div class="b" style="left:1465px;top:382px;width:19px;height:2px;background:#90d040;"></div>
<div class="m" style="left:1465px;top:386px;line-height:18px;"><span style="color:#aca4f0">OF</span></div>
<div class="m" style="left:1495px;top:386px;line-height:18px;"><span style="color:#e0e0e0"><span style="font-family:'Liberation Sans';font-size:17px;letter-spacing:0.545px;line-height:0">0</span></span></div>
<div class="m" style="left:1525px;top:386px;line-height:18px;"><span style="color:#aca4f0">SF</span></div>
<div class="m" style="left:1555px;top:386px;line-height:18px;"><span style="color:#e0e0e0"><span style="font-family:'Liberation Sans';font-size:17px;letter-spacing:0.545px;line-height:0">0</span></span></div>
<div class="m" style="left:1585px;top:386px;line-height:18px;"><span style="color:#aca4f0">DF</span></div>
<div class="m" style="left:1615px;top:386px;line-height:18px;"><span style="color:#e0e0e0"><span style="font-family:'Liberation Sans';font-size:17px;letter-spacing:0.545px;line-height:0">0</span></span></div>
<div class="m" style="left:1465px;top:404px;line-height:18px;"><span style="color:#aca4f0">CF</span></div>
<div class="m" style="left:1495px;top:404px;line-height:18px;"><span style="color:#e0e0e0"><span style="font-family:'Liberation Sans';font-size:17px;letter-spacing:0.545px;line-height:0">0</span></span></div>
<div class="m" style="left:1525px;top:404px;line-height:18px;"><span style="color:#aca4f0">TF</span></div>
<div class="m" style="left:1555px;top:404px;line-height:18px;"><span style="color:#e0e0e0"><span style="font-family:'Liberation Sans';font-size:17px;letter-spacing:0.545px;line-height:0">0</span></span></div>
<div class="m" style="left:1585px;top:404px;line-height:18px;"><span style="color:#aca4f0">IF</span></div>
<div class="m" style="left:1615px;top:404px;line-height:18px;"><span style="color:#e0e0e0">1</span></div>
<div class="m" style="left:1465px;top:440px;line-height:18px;"><span style="color:#aca4f0">LastError</span></div>
<div class="m" style="left:1575px;top:440px;line-height:18px;"><span style="color:#e0e0e0"><span style="font-family:'Liberation Sans';font-size:17px;letter-spacing:0.545px;line-height:0">00000000</span> (ERROR_SUCCESS)</span></div>
<div class="clip" style="left:1455px;top:0;width:446px;height:1028px">
<div class="m" style="left:120px;top:458px;line-height:18px;"><span style="color:#f08c78">C<span style="font-family:'Liberation Sans';font-size:17px;letter-spacing:0.545px;line-height:0">00000</span>34 (STATUS_OBJECT_NAME_NOT_FOUND)</span></div>
</div>
<div class="m" style="left:1465px;top:458px;line-height:18px;"><span style="color:#aca4f0">LastStatus</span></div>
<div class="m" style="left:1465px;top:494px;line-height:18px;"><span style="color:#aca4f0">GS</span></div>
<div class="m" style="left:1495px;top:494px;line-height:18px;"><span style="color:#e0e0e0"><span style="font-family:'Liberation Sans';font-size:17px;letter-spacing:0.545px;line-height:0">00</span>2B</span></div>
<div class="m" style="left:1555px;top:494px;line-height:18px;"><span style="color:#aca4f0">FS</span></div>
<div class="m" style="left:1585px;top:494px;line-height:18px;"><span style="color:#e0e0e0"><span style="font-family:'Liberation Sans';font-size:17px;letter-spacing:0.545px;line-height:0">00</span>53</span></div>
<div class="m" style="left:1465px;top:512px;line-height:18px;"><span style="color:#aca4f0">ES</span></div>
<div class="m" style="left:1495px;top:512px;line-height:18px;"><span style="color:#e0e0e0"><span style="font-family:'Liberation Sans';font-size:17px;letter-spacing:0.545px;line-height:0">00</span>2B</span></div>
<div class="m" style="left:1555px;top:512px;line-height:18px;"><span style="color:#aca4f0">DS</span></div>
<div class="m" style="left:1585px;top:512px;line-height:18px;"><span style="color:#e0e0e0"><span style="font-family:'Liberation Sans';font-size:17px;letter-spacing:0.545px;line-height:0">00</span>2B</span></div>
<div class="m" style="left:1465px;top:530px;line-height:18px;"><span style="color:#aca4f0">CS</span></div>
<div class="m" style="left:1495px;top:530px;line-height:18px;"><span style="color:#e0e0e0"><span style="font-family:'Liberation Sans';font-size:17px;letter-spacing:0.545px;line-height:0">00</span>23</span></div>
<div class="m" style="left:1555px;top:530px;line-height:18px;"><span style="color:#aca4f0">SS</span></div>
<div class="m" style="left:1585px;top:530px;line-height:18px;"><span style="color:#e0e0e0"><span style="font-family:'Liberation Sans';font-size:17px;letter-spacing:0.545px;line-height:0">00</span>2B</span></div>
<div class="b" style="left:1490px;top:567px;width:4px;height:1px;background:#a88ef0;"></div>
<div class="b" style="left:1498px;top:567px;width:4px;height:1px;background:#a88ef0;"></div>
<div class="b" style="left:1506px;top:567px;width:4px;height:1px;background:#a88ef0;"></div>
<div class="b" style="left:1528px;top:567px;width:195px;height:1px;background:repeating-linear-gradient(90deg,#d0d0d0 0 5px,transparent 5px 10px)"></div>
<div class="b" style="left:1747px;top:567px;width:6px;height:1px;background:#d06080;"></div>
<div class="b" style="left:1756px;top:567px;width:8px;height:1px;background:#d06080;"></div>
<div class="b" style="left:1778px;top:567px;width:4px;height:1px;background:#d06080;"></div>
<div class="b" style="left:1797px;top:567px;width:14px;height:1px;background:#d06080;"></div>
<div class="b" style="left:1825px;top:567px;width:5px;height:1px;background:#d06080;"></div>
<div class="b" style="left:1845px;top:567px;width:5px;height:1px;background:#d06080;"></div>
<div class="b" style="left:1855px;top:567px;width:5px;height:1px;background:#d06080;"></div>
<div class="b" style="left:1865px;top:567px;width:5px;height:1px;background:#d06080;"></div>
<div class="b" style="left:1875px;top:567px;width:5px;height:1px;background:#d06080;"></div>
<div class="b" style="left:1885px;top:567px;width:5px;height:1px;background:#d06080;"></div>
<div class="b" style="left:1895px;top:567px;width:5px;height:1px;background:#d06080;"></div>
<svg style="left:1905px;top:151px" width="10" height="8"><path d="M1 7 L5 1 L9 7 Z" fill="#9a9a9a"/></svg>
<div class="b" style="left:1905px;top:162px;width:10px;height:392px;background:#3a3a3a;border-radius:5px"></div>
<div class="b" style="left:1905px;top:162px;width:10px;height:110px;background:#6e6e6e;border-radius:5px"></div>
<svg style="left:1905px;top:557px" width="10" height="8"><path d="M1 1 L5 7 L9 1 Z" fill="#9a9a9a"/></svg>
<svg style="left:1459px;top:572px" width="8" height="10"><path d="M7 1 L1 5 L7 9 Z" fill="#9a9a9a"/></svg>
<div class="b" style="left:1469px;top:572px;width:421px;height:10px;background:#3a3a3a;border-radius:5px"></div>
<div class="b" style="left:1470px;top:572px;width:185px;height:10px;background:#6e6e6e;border-radius:5px"></div>
<svg style="left:1892px;top:572px" width="8" height="10"><path d="M1 1 L7 5 L1 9 Z" fill="#9a9a9a"/></svg>
<div class="b" style="left:1455px;top:586px;width:465px;height:1px;background:#3a3a3a;"></div>
<div class="t" style="left:1460px;top:591px;color:#e0e0e0;font-size:16px;font-family:'Liberation Sans',sans-serif;line-height:20px;">默认 </div>
<div class="t" style="left:1497px;top:592px;color:#e0e0e0;font-size:16px;letter-spacing:-1.6px;line-height:20px;font-family:'Liberation Mono',monospace">(stdcall)</div>
<svg style="left:1732px;top:597px" width="11" height="7"><path d="M0 0 H11 L5.5 6 Z" fill="#9a9a9a"/></svg>
<div class="b" style="left:1749px;top:589px;width:101px;height:26px;background:#2a2a2a;"></div>
<svg style="left:1752px;top:597px" width="11" height="7"><path d="M0 0 H11 L5.5 6 Z" fill="#9a9a9a"/></svg>
<div class="t" style="left:1772px;top:592px;color:#e0e0e0;font-size:16px;font-family:'Liberation Sans',sans-serif;line-height:20px;">5</div>
<svg style="left:1837px;top:598px" width="11" height="7"><path d="M0 6 H11 L5.5 0 Z" fill="#9a9a9a"/></svg>
<div class="b" style="left:1855px;top:592px;width:14px;height:15px;border:1px solid #8a8a8a;border-radius:2px"></div>
<div class="t" style="left:1877px;top:591px;color:#e0e0e0;font-size:16px;font-family:'Liberation Sans',sans-serif;line-height:20px;">解锁</div>
<div class="b" style="left:1455px;top:617px;width:445px;height:17px;background:#3c3c3c;"></div>
<div class="clip" style="left:1455px;top:617px;width:445px;height:95px">
<div class="m" style="left:4px;top:0px;line-height:17px;"><span style="color:#e0e0e0">1: [esp+4] <span style="font-family:'Liberation Sans';font-size:17px;letter-spacing:0.545px;line-height:0">00</span>2<span style="font-family:'Liberation Sans';font-size:17px;letter-spacing:0.545px;line-height:0">0</span>7<span style="font-family:'Liberation Sans';font-size:17px;letter-spacing:0.545px;line-height:0">000</span></span></div>
<div class="m" style="left:4px;top:17px;line-height:17px;"><span style="color:#e0e0e0">2: [esp+8] 754C634<span style="font-family:'Liberation Sans';font-size:17px;letter-spacing:0.545px;line-height:0">0</span> &lt;kernel32.BaseThreadInitThunk&gt;</span></div>
<div class="m" style="left:4px;top:34px;line-height:17px;"><span style="color:#e0e0e0">3: [esp+C] <span style="font-family:'Liberation Sans';font-size:17px;letter-spacing:0.545px;line-height:0">00</span>19FFDC</span></div>
<div class="m" style="left:4px;top:51px;line-height:17px;"><span style="color:#e0e0e0">4: [esp+1<span style="font-family:'Liberation Sans';font-size:17px;letter-spacing:0.545px;line-height:0">0</span>] 77128944 ntdll.77128944</span></div>
<div class="m" style="left:4px;top:68px;line-height:17px;"><span style="color:#e0e0e0">5: [esp+14] <span style="font-family:'Liberation Sans';font-size:17px;letter-spacing:0.545px;line-height:0">00</span>2<span style="font-family:'Liberation Sans';font-size:17px;letter-spacing:0.545px;line-height:0">0</span>7<span style="font-family:'Liberation Sans';font-size:17px;letter-spacing:0.545px;line-height:0">000</span></span></div>
</div>
<svg style="left:1905px;top:622px" width="10" height="8"><path d="M1 7 L5 1 L9 7 Z" fill="#9a9a9a"/></svg>
<div class="b" style="left:1905px;top:633px;width:10px;height:68px;background:#3a3a3a;border-radius:5px"></div>
<div class="b" style="left:1905px;top:636px;width:10px;height:64px;background:#6e6e6e;border-radius:5px"></div>
<svg style="left:1905px;top:704px" width="10" height="8"><path d="M1 1 L5 7 L9 1 Z" fill="#9a9a9a"/></svg>
<div class="b" style="left:2px;top:714px;width:102px;height:28px;background:#3a3a3a;"></div>
<div class="b" style="left:2px;top:742px;width:102px;height:2px;background:#7d92e6;"></div>
<svg style="left:12px;top:722px" width="16" height="16" viewBox="0 0 16 16"><rect x="4" y="1" width="12" height="9" rx="1" fill="#e8e8e8"/><path d="M6.5 1.5V9.5M9 1.5V9.5M11.5 1.5V9.5M14 1.5V9.5" stroke="#8a8a8a"/><rect x="0.5" y="3" width="4" height="7" fill="#e8c030"/><rect x="1.5" y="4" width="2" height="2" fill="#4080c0"/><circle cx="3" cy="11" r="1.6" fill="#111" stroke="#ddd" stroke-width="0.6"/><circle cx="13" cy="11" r="1.6" fill="#111" stroke="#ddd" stroke-width="0.6"/></svg>
<div class="t" style="left:41px;top:720px;color:#8fa2ee;font-size:16px;line-height:20px;font-family:'Liberation Mono',monospace;letter-spacing:-1.6px"><span style='font-size:15px;letter-spacing:0'>内存</span> 1</div>
<div class="b" style="left:106px;top:714px;width:101px;height:28px;background:#2b2b2b;"></div>
<svg style="left:116px;top:722px" width="16" height="16" viewBox="0 0 16 16"><rect x="4" y="1" width="12" height="9" rx="1" fill="#e8e8e8"/><path d="M6.5 1.5V9.5M9 1.5V9.5M11.5 1.5V9.5M14 1.5V9.5" stroke="#8a8a8a"/><rect x="0.5" y="3" width="4" height="7" fill="#e8c030"/><rect x="1.5" y="4" width="2" height="2" fill="#4080c0"/><circle cx="3" cy="11" r="1.6" fill="#111" stroke="#ddd" stroke-width="0.6"/><circle cx="13" cy="11" r="1.6" fill="#111" stroke="#ddd" stroke-width="0.6"/></svg>
<div class="t" style="left:145px;top:720px;color:#e6e6e6;font-size:16px;line-height:20px;font-family:'Liberation Mono',monospace;letter-spacing:-1.6px"><span style='font-size:15px;letter-spacing:0'>内存</span> 2</div>
<div class="b" style="left:210px;top:714px;width:101px;height:28px;background:#2b2b2b;"></div>
<svg style="left:220px;top:722px" width="16" height="16" viewBox="0 0 16 16"><rect x="4" y="1" width="12" height="9" rx="1" fill="#e8e8e8"/><path d="M6.5 1.5V9.5M9 1.5V9.5M11.5 1.5V9.5M14 1.5V9.5" stroke="#8a8a8a"/><rect x="0.5" y="3" width="4" height="7" fill="#e8c030"/><rect x="1.5" y="4" width="2" height="2" fill="#4080c0"/><circle cx="3" cy="11" r="1.6" fill="#111" stroke="#ddd" stroke-width="0.6"/><circle cx="13" cy="11" r="1.6" fill="#111" stroke="#ddd" stroke-width="0.6"/></svg>
<div class="t" style="left:249px;top:720px;color:#e6e6e6;font-size:16px;line-height:20px;font-family:'Liberation Mono',monospace;letter-spacing:-1.6px"><span style='font-size:15px;letter-spacing:0'>内存</span> 3</div>
<div class="b" style="left:314px;top:714px;width:101px;height:28px;background:#2b2b2b;"></div>
<svg style="left:324px;top:722px" width="16" height="16" viewBox="0 0 16 16"><rect x="4" y="1" width="12" height="9" rx="1" fill="#e8e8e8"/><path d="M6.5 1.5V9.5M9 1.5V9.5M11.5 1.5V9.5M14 1.5V9.5" stroke="#8a8a8a"/><rect x="0.5" y="3" width="4" height="7" fill="#e8c030"/><rect x="1.5" y="4" width="2" height="2" fill="#4080c0"/><circle cx="3" cy="11" r="1.6" fill="#111" stroke="#ddd" stroke-width="0.6"/><circle cx="13" cy="11" r="1.6" fill="#111" stroke="#ddd" stroke-width="0.6"/></svg>
<div class="t" style="left:353px;top:720px;color:#e6e6e6;font-size:16px;line-height:20px;font-family:'Liberation Mono',monospace;letter-spacing:-1.6px"><span style='font-size:15px;letter-spacing:0'>内存</span> 4</div>
<div class="b" style="left:418px;top:714px;width:102px;height:28px;background:#2b2b2b;"></div>
<svg style="left:428px;top:722px" width="16" height="16" viewBox="0 0 16 16"><rect x="4" y="1" width="12" height="9" rx="1" fill="#e8e8e8"/><path d="M6.5 1.5V9.5M9 1.5V9.5M11.5 1.5V9.5M14 1.5V9.5" stroke="#8a8a8a"/><rect x="0.5" y="3" width="4" height="7" fill="#e8c030"/><rect x="1.5" y="4" width="2" height="2" fill="#4080c0"/><circle cx="3" cy="11" r="1.6" fill="#111" stroke="#ddd" stroke-width="0.6"/><circle cx="13" cy="11" r="1.6" fill="#111" stroke="#ddd" stroke-width="0.6"/></svg>
<div class="t" style="left:457px;top:720px;color:#e6e6e6;font-size:16px;line-height:20px;font-family:'Liberation Mono',monospace;letter-spacing:-1.6px"><span style='font-size:15px;letter-spacing:0'>内存</span> 5</div>
<div class="b" style="left:522px;top:714px;width:101px;height:28px;background:#2b2b2b;"></div>
<svg style="left:532px;top:720px" width="16" height="16" viewBox="0 0 16 16"><path d="M2 3 L5 6 L11 6 L14 3 L14.5 10 Q8 16 1.5 10 Z" fill="#e8a040"/><ellipse cx="8" cy="11" rx="3.5" ry="2.5" fill="#f8e0b0"/><circle cx="5.5" cy="8.5" r="1" fill="#222"/><circle cx="10.5" cy="8.5" r="1" fill="#222"/><circle cx="8" cy="10.5" r="0.8" fill="#a03020"/></svg>
<div class="t" style="left:561px;top:720px;color:#e6e6e6;font-size:16px;line-height:20px;font-family:'Liberation Mono',monospace;letter-spacing:-1.6px"><span style='font-size:15px;letter-spacing:0'>监视</span> 1</div>
<div class="b" style="left:626px;top:714px;width:115px;height:28px;background:#2b2b2b;"></div>
<svg style="left:636px;top:720px" width="16" height="16" viewBox="0 0 16 16"><path d="M2 4 V12 M14 4 V12" stroke="#aa4444"/><path d="M5 6 L8 10 M8 6 L5 10" stroke="#cc3333"/><path d="M10 7H13M10 9H13" stroke="#888"/></svg>
<div class="t" style="left:665px;top:720px;color:#e6e6e6;font-size:16px;line-height:20px;font-family:'Liberation Mono',monospace;letter-spacing:-1.6px"><span style='font-size:15px;letter-spacing:0'>局部变量</span></div>
<div class="b" style="left:744px;top:714px;width:100px;height:28px;background:#2b2b2b;"></div>
<svg style="left:754px;top:720px" width="16" height="16" viewBox="0 0 16 16"><path d="M5 5 Q6 1.5 9.5 2 Q13 3 11 7 L5 15" stroke="#e82828" stroke-width="2.6" fill="none" stroke-linecap="round"/><path d="M6.5 3.5 L8 5 M10.5 5 L12 6.5 M8 10 L9.5 11" stroke="#fff" stroke-width="1.1"/></svg>
<div class="t" style="left:783px;top:720px;color:#e6e6e6;font-size:16px;line-height:20px;font-family:'Liberation Mono',monospace;letter-spacing:-1.6px"><span style='font-size:15px;letter-spacing:0'>结构体</span></div>
<div class="b" style="left:2px;top:746px;width:1139px;height:20px;background:#262626;"></div>
<div class="b" style="left:90px;top:746px;width:1px;height:20px;background:#3a3a3a;"></div>
<div class="b" style="left:568px;top:746px;width:1px;height:20px;background:#3a3a3a;"></div>
<div class="b" style="left:736px;top:746px;width:1px;height:20px;background:#3a3a3a;"></div>
<div class="b" style="left:1141px;top:746px;width:1px;height:20px;background:#3a3a3a;"></div>
<div class="b" style="left:2px;top:766px;width:1139px;height:1px;background:#333333;"></div>
<div class="t" style="left:8px;top:745px;color:#e0e0e0;font-size:16px;font-family:'Liberation Sans',sans-serif;line-height:20px;">地址</div>
<div class="t" style="left:96px;top:745px;color:#e0e0e0;font-size:16px;font-family:'Liberation Sans',sans-serif;line-height:20px;">十六进制</div>
<div class="m" style="left:573px;top:749px;line-height:17px;"><span style="color:#e0e0e0">ASCII</span></div>
<div class="b" style="left:90px;top:766px;width:1px;height:204px;background:#4a4a4a;"></div>
<div class="b" style="left:211px;top:766px;width:1px;height:204px;background:#4a4a4a;"></div>
<div class="b" style="left:331px;top:766px;width:1px;height:204px;background:#4a4a4a;"></div>
<div class="b" style="left:451px;top:766px;width:1px;height:204px;background:#4a4a4a;"></div>
<div class="b" style="left:568px;top:766px;width:1px;height:204px;background:#4a4a4a;"></div>
<div class="b" style="left:736px;top:766px;width:1px;height:204px;background:#4a4a4a;"></div>
<div class="b" style="left:1141px;top:766px;width:1px;height:204px;background:#3a3a3a;"></div>
<div class="b" style="left:91px;top:767px;width:30px;height:17px;background:#3c3c3c;"></div>
<div class="b" style="left:573px;top:767px;width:10px;height:17px;background:#3c3c3c;"></div>
<div class="m" style="left:8px;top:767px;line-height:17px;"><span style="color:#b0b0b0">77<span style="font-family:'Liberation Sans';font-size:17px;letter-spacing:0.545px;line-height:0">0</span>C1<span style="font-family:'Liberation Sans';font-size:17px;letter-spacing:0.545px;line-height:0">000</span></span></div>
<div class="m" style="left:96px;top:767px;line-height:17px;"><span style="color:#e0e0e0">36 <span style="font-family:'Liberation Sans';font-size:17px;letter-spacing:0.545px;line-height:0">00</span> 38 <span style="font-family:'Liberation Sans';font-size:17px;letter-spacing:0.545px;line-height:0">00</span></span></div>
<div class="m" style="left:216px;top:767px;line-height:17px;"><span style="color:#e0e0e0">94 D9 <span style="font-family:'Liberation Sans';font-size:17px;letter-spacing:0.545px;line-height:0">0</span>C 77</span></div>
<div class="b" style="left:216px;top:782px;width:110px;height:2px;background:#e05050;"></div>
<div class="m" style="left:336px;top:767px;line-height:17px;"><span style="color:#e0e0e0">1C <span style="font-family:'Liberation Sans';font-size:17px;letter-spacing:0.545px;line-height:0">00</span> 1E <span style="font-family:'Liberation Sans';font-size:17px;letter-spacing:0.545px;line-height:0">00</span></span></div>
<div class="m" style="left:456px;top:767px;line-height:17px;"><span style="color:#e0e0e0">6<span style="font-family:'Liberation Sans';font-size:17px;letter-spacing:0.545px;line-height:0">0</span> D9 <span style="font-family:'Liberation Sans';font-size:17px;letter-spacing:0.545px;line-height:0">0</span>C 77</span></div>
<div class="b" style="left:456px;top:782px;width:110px;height:2px;background:#e05050;"></div>
<div class="m" style="left:573px;top:767px;line-height:17px;"><span style="color:#e0e0e0">6.8..Ù.w....`Ù.w</span></div>
<div class="m" style="left:8px;top:784px;line-height:17px;"><span style="color:#b0b0b0">77<span style="font-family:'Liberation Sans';font-size:17px;letter-spacing:0.545px;line-height:0">0</span>C1<span style="font-family:'Liberation Sans';font-size:17px;letter-spacing:0.545px;line-height:0">0</span>1<span style="font-family:'Liberation Sans';font-size:17px;letter-spacing:0.545px;line-height:0">0</span></span></div>
<div class="m" style="left:96px;top:784px;line-height:17px;"><span style="color:#e0e0e0">28 <span style="font-family:'Liberation Sans';font-size:17px;letter-spacing:0.545px;line-height:0">00</span> 2A <span style="font-family:'Liberation Sans';font-size:17px;letter-spacing:0.545px;line-height:0">00</span></span></div>
<div class="m" style="left:216px;top:784px;line-height:17px;"><span style="color:#e0e0e0">34 D9 <span style="font-family:'Liberation Sans';font-size:17px;letter-spacing:0.545px;line-height:0">0</span>C 77</span></div>
<div class="b" style="left:216px;top:799px;width:110px;height:2px;background:#e05050;"></div>
<div class="m" style="left:336px;top:784px;line-height:17px;"><span style="color:#e0e0e0">34 <span style="font-family:'Liberation Sans';font-size:17px;letter-spacing:0.545px;line-height:0">00</span> 36 <span style="font-family:'Liberation Sans';font-size:17px;letter-spacing:0.545px;line-height:0">00</span></span></div>
<div class="m" style="left:456px;top:784px;line-height:17px;"><span style="color:#e0e0e0">FC D8 <span style="font-family:'Liberation Sans';font-size:17px;letter-spacing:0.545px;line-height:0">0</span>C 77</span></div>
<div class="b" style="left:456px;top:799px;width:110px;height:2px;background:#e05050;"></div>
<div class="m" style="left:573px;top:784px;line-height:17px;"><span style="color:#e0e0e0">(.*.4Ù.w4.6.üØ.w</span></div>
<div class="m" style="left:8px;top:801px;line-height:17px;"><span style="color:#b0b0b0">77<span style="font-family:'Liberation Sans';font-size:17px;letter-spacing:0.545px;line-height:0">0</span>C1<span style="font-family:'Liberation Sans';font-size:17px;letter-spacing:0.545px;line-height:0">0</span>2<span style="font-family:'Liberation Sans';font-size:17px;letter-spacing:0.545px;line-height:0">0</span></span></div>
<div class="m" style="left:96px;top:801px;line-height:17px;"><span style="color:#e0e0e0">1E <span style="font-family:'Liberation Sans';font-size:17px;letter-spacing:0.545px;line-height:0">00</span> 2<span style="font-family:'Liberation Sans';font-size:17px;letter-spacing:0.545px;line-height:0">0</span> <span style="font-family:'Liberation Sans';font-size:17px;letter-spacing:0.545px;line-height:0">00</span></span></div>
<div class="m" style="left:216px;top:801px;line-height:17px;"><span style="color:#e0e0e0">DC D8 <span style="font-family:'Liberation Sans';font-size:17px;letter-spacing:0.545px;line-height:0">0</span>C 77</span></div>
<div class="b" style="left:216px;top:816px;width:110px;height:2px;background:#e05050;"></div>
<div class="m" style="left:336px;top:801px;line-height:17px;"><span style="color:#e0e0e0">1A <span style="font-family:'Liberation Sans';font-size:17px;letter-spacing:0.545px;line-height:0">00</span> 1C <span style="font-family:'Liberation Sans';font-size:17px;letter-spacing:0.545px;line-height:0">00</span></span></div>
<div class="m" style="left:456px;top:801px;line-height:17px;"><span style="color:#e0e0e0">C<span style="font-family:'Liberation Sans';font-size:17px;letter-spacing:0.545px;line-height:0">0</span> D8 <span style="font-family:'Liberation Sans';font-size:17px;letter-spacing:0.545px;line-height:0">0</span>C 77</span></div>
<div class="b" style="left:456px;top:816px;width:110px;height:2px;background:#e05050;"></div>
<div class="m" style="left:573px;top:801px;line-height:17px;"><span style="color:#e0e0e0">.. .ÜØ.w....ÀØ.w</span></div>
<div class="m" style="left:8px;top:818px;line-height:17px;"><span style="color:#b0b0b0">77<span style="font-family:'Liberation Sans';font-size:17px;letter-spacing:0.545px;line-height:0">0</span>C1<span style="font-family:'Liberation Sans';font-size:17px;letter-spacing:0.545px;line-height:0">0</span>3<span style="font-family:'Liberation Sans';font-size:17px;letter-spacing:0.545px;line-height:0">0</span></span></div>
<div class="m" style="left:96px;top:818px;line-height:17px;"><span style="color:#e0e0e0">18 <span style="font-family:'Liberation Sans';font-size:17px;letter-spacing:0.545px;line-height:0">00</span> 1A <span style="font-family:'Liberation Sans';font-size:17px;letter-spacing:0.545px;line-height:0">00</span></span></div>
<div class="b" style="left:96px;top:833px;width:110px;height:2px;background:#7d92e6;"></div>
<div class="m" style="left:216px;top:818px;line-height:17px;"><span style="color:#e0e0e0">A4 D8 <span style="font-family:'Liberation Sans';font-size:17px;letter-spacing:0.545px;line-height:0">0</span>C 77</span></div>
<div class="b" style="left:216px;top:833px;width:110px;height:2px;background:#e05050;"></div>
<div class="m" style="left:336px;top:818px;line-height:17px;"><span style="color:#e0e0e0">2<span style="font-family:'Liberation Sans';font-size:17px;letter-spacing:0.545px;line-height:0">0</span> <span style="font-family:'Liberation Sans';font-size:17px;letter-spacing:0.545px;line-height:0">00</span> 22 <span style="font-family:'Liberation Sans';font-size:17px;letter-spacing:0.545px;line-height:0">00</span></span></div>
<div class="m" style="left:456px;top:818px;line-height:17px;"><span style="color:#e0e0e0">8<span style="font-family:'Liberation Sans';font-size:17px;letter-spacing:0.545px;line-height:0">0</span> D8 <span style="font-family:'Liberation Sans';font-size:17px;letter-spacing:0.545px;line-height:0">0</span>C 77</span></div>
<div class="b" style="left:456px;top:833px;width:110px;height:2px;background:#e05050;"></div>
<div class="m" style="left:573px;top:818px;line-height:17px;"><span style="color:#e0e0e0">....¤Ø.w ."..Ø.w</span></div>
<div class="m" style="left:8px;top:835px;line-height:17px;"><span style="color:#b0b0b0">77<span style="font-family:'Liberation Sans';font-size:17px;letter-spacing:0.545px;line-height:0">0</span>C1<span style="font-family:'Liberation Sans';font-size:17px;letter-spacing:0.545px;line-height:0">0</span>4<span style="font-family:'Liberation Sans';font-size:17px;letter-spacing:0.545px;line-height:0">0</span></span></div>
<div class="m" style="left:96px;top:835px;line-height:17px;"><span style="color:#e0e0e0">3<span style="font-family:'Liberation Sans';font-size:17px;letter-spacing:0.545px;line-height:0">0</span> <span style="font-family:'Liberation Sans';font-size:17px;letter-spacing:0.545px;line-height:0">00</span> 32 <span style="font-family:'Liberation Sans';font-size:17px;letter-spacing:0.545px;line-height:0">00</span></span></div>
<div class="m" style="left:216px;top:835px;line-height:17px;"><span style="color:#e0e0e0">4C D8 <span style="font-family:'Liberation Sans';font-size:17px;letter-spacing:0.545px;line-height:0">0</span>C 77</span></div>
<div class="b" style="left:216px;top:850px;width:110px;height:2px;background:#e05050;"></div>
<div class="m" style="left:336px;top:835px;line-height:17px;"><span style="color:#e0e0e0">2C <span style="font-family:'Liberation Sans';font-size:17px;letter-spacing:0.545px;line-height:0">00</span> 2E <span style="font-family:'Liberation Sans';font-size:17px;letter-spacing:0.545px;line-height:0">00</span></span></div>
<div class="m" style="left:456px;top:835px;line-height:17px;"><span style="color:#e0e0e0">1C D8 <span style="font-family:'Liberation Sans';font-size:17px;letter-spacing:0.545px;line-height:0">0</span>C 77</span></div>
<div class="b" style="left:456px;top:850px;width:110px;height:2px;background:#e05050;"></div>
<div class="m" style="left:573px;top:835px;line-height:17px;"><span style="color:#e0e0e0"><span style="font-family:'Liberation Sans';font-size:17px;letter-spacing:0.545px;line-height:0">0</span>.2.LØ.w,....Ø.w</span></div>
<div class="m" style="left:8px;top:852px;line-height:17px;"><span style="color:#b0b0b0">77<span style="font-family:'Liberation Sans';font-size:17px;letter-spacing:0.545px;line-height:0">0</span>C1<span style="font-family:'Liberation Sans';font-size:17px;letter-spacing:0.545px;line-height:0">0</span>5<span style="font-family:'Liberation Sans';font-size:17px;letter-spacing:0.545px;line-height:0">0</span></span></div>
<div class="m" style="left:96px;top:852px;line-height:17px;"><span style="color:#e0e0e0">2<span style="font-family:'Liberation Sans';font-size:17px;letter-spacing:0.545px;line-height:0">0</span> <span style="font-family:'Liberation Sans';font-size:17px;letter-spacing:0.545px;line-height:0">00</span> 22 <span style="font-family:'Liberation Sans';font-size:17px;letter-spacing:0.545px;line-height:0">00</span></span></div>
<div class="m" style="left:216px;top:852px;line-height:17px;"><span style="color:#e0e0e0">F8 D7 <span style="font-family:'Liberation Sans';font-size:17px;letter-spacing:0.545px;line-height:0">0</span>C 77</span></div>
<div class="b" style="left:216px;top:867px;width:110px;height:2px;background:#e05050;"></div>
<div class="m" style="left:336px;top:852px;line-height:17px;"><span style="color:#e0e0e0">18 <span style="font-family:'Liberation Sans';font-size:17px;letter-spacing:0.545px;line-height:0">00</span> 1A <span style="font-family:'Liberation Sans';font-size:17px;letter-spacing:0.545px;line-height:0">00</span></span></div>
<div class="b" style="left:336px;top:867px;width:110px;height:2px;background:#7d92e6;"></div>
<div class="m" style="left:456px;top:852px;line-height:17px;"><span style="color:#e0e0e0">DC D7 <span style="font-family:'Liberation Sans';font-size:17px;letter-spacing:0.545px;line-height:0">0</span>C 77</span></div>
<div class="b" style="left:456px;top:867px;width:110px;height:2px;background:#e05050;"></div>
<div class="m" style="left:573px;top:852px;line-height:17px;"><span style="color:#e0e0e0"> .".ø×.w....Ü×.w</span></div>
<div class="m" style="left:8px;top:869px;line-height:17px;"><span style="color:#b0b0b0">77<span style="font-family:'Liberation Sans';font-size:17px;letter-spacing:0.545px;line-height:0">0</span>C1<span style="font-family:'Liberation Sans';font-size:17px;letter-spacing:0.545px;line-height:0">0</span>6<span style="font-family:'Liberation Sans';font-size:17px;letter-spacing:0.545px;line-height:0">0</span></span></div>
<div class="m" style="left:96px;top:869px;line-height:17px;"><span style="color:#e0e0e0">1<span style="font-family:'Liberation Sans';font-size:17px;letter-spacing:0.545px;line-height:0">0</span> <span style="font-family:'Liberation Sans';font-size:17px;letter-spacing:0.545px;line-height:0">00</span> 12 <span style="font-family:'Liberation Sans';font-size:17px;letter-spacing:0.545px;line-height:0">00</span></span></div>
<div class="m" style="left:216px;top:869px;line-height:17px;"><span style="color:#e0e0e0">C8 D7 <span style="font-family:'Liberation Sans';font-size:17px;letter-spacing:0.545px;line-height:0">0</span>C 77</span></div>
<div class="b" style="left:216px;top:884px;width:110px;height:2px;background:#e05050;"></div>
<div class="m" style="left:336px;top:869px;line-height:17px;"><span style="color:#e0e0e0">16 <span style="font-family:'Liberation Sans';font-size:17px;letter-spacing:0.545px;line-height:0">00</span> 18 <span style="font-family:'Liberation Sans';font-size:17px;letter-spacing:0.545px;line-height:0">00</span></span></div>
<div class="m" style="left:456px;top:869px;line-height:17px;"><span style="color:#e0e0e0">B<span style="font-family:'Liberation Sans';font-size:17px;letter-spacing:0.545px;line-height:0">0</span> 8B <span style="font-family:'Liberation Sans';font-size:17px;letter-spacing:0.545px;line-height:0">0</span>C 77</span></div>
<div class="b" style="left:456px;top:884px;width:110px;height:2px;background:#e05050;"></div>
<div class="m" style="left:573px;top:869px;line-height:17px;"><span style="color:#e0e0e0">....È×.w....°..w</span></div>
<div class="m" style="left:8px;top:886px;line-height:17px;"><span style="color:#b0b0b0">77<span style="font-family:'Liberation Sans';font-size:17px;letter-spacing:0.545px;line-height:0">0</span>C1<span style="font-family:'Liberation Sans';font-size:17px;letter-spacing:0.545px;line-height:0">0</span>7<span style="font-family:'Liberation Sans';font-size:17px;letter-spacing:0.545px;line-height:0">0</span></span></div>
<div class="m" style="left:96px;top:886px;line-height:17px;"><span style="color:#e0e0e0">14 <span style="font-family:'Liberation Sans';font-size:17px;letter-spacing:0.545px;line-height:0">00</span> 16 <span style="font-family:'Liberation Sans';font-size:17px;letter-spacing:0.545px;line-height:0">00</span></span></div>
<div class="m" style="left:216px;top:886px;line-height:17px;"><span style="color:#e0e0e0">28 84 <span style="font-family:'Liberation Sans';font-size:17px;letter-spacing:0.545px;line-height:0">0</span>C 77</span></div>
<div class="b" style="left:216px;top:901px;width:110px;height:2px;background:#e05050;"></div>
<div class="m" style="left:336px;top:886px;line-height:17px;"><span style="color:#e0e0e0"><span style="font-family:'Liberation Sans';font-size:17px;letter-spacing:0.545px;line-height:0">00</span> <span style="font-family:'Liberation Sans';font-size:17px;letter-spacing:0.545px;line-height:0">00</span> <span style="font-family:'Liberation Sans';font-size:17px;letter-spacing:0.545px;line-height:0">0</span>2 <span style="font-family:'Liberation Sans';font-size:17px;letter-spacing:0.545px;line-height:0">00</span></span></div>
<div class="b" style="left:336px;top:901px;width:110px;height:2px;background:#7d92e6;"></div>
<div class="m" style="left:456px;top:886px;line-height:17px;"><span style="color:#e0e0e0">7<span style="font-family:'Liberation Sans';font-size:17px;letter-spacing:0.545px;line-height:0">0</span> 5B <span style="font-family:'Liberation Sans';font-size:17px;letter-spacing:0.545px;line-height:0">0</span>C 77</span></div>
<div class="b" style="left:456px;top:901px;width:110px;height:2px;background:#e05050;"></div>
<div class="m" style="left:573px;top:886px;line-height:17px;"><span style="color:#e0e0e0">....(..w....p[.w</span></div>
<div class="m" style="left:8px;top:903px;line-height:17px;"><span style="color:#b0b0b0">77<span style="font-family:'Liberation Sans';font-size:17px;letter-spacing:0.545px;line-height:0">0</span>C1<span style="font-family:'Liberation Sans';font-size:17px;letter-spacing:0.545px;line-height:0">0</span>8<span style="font-family:'Liberation Sans';font-size:17px;letter-spacing:0.545px;line-height:0">0</span></span></div>
<div class="m" style="left:96px;top:903px;line-height:17px;"><span style="color:#e0e0e0"><span style="font-family:'Liberation Sans';font-size:17px;letter-spacing:0.545px;line-height:0">0</span>6 <span style="font-family:'Liberation Sans';font-size:17px;letter-spacing:0.545px;line-height:0">00</span> <span style="font-family:'Liberation Sans';font-size:17px;letter-spacing:0.545px;line-height:0">0</span>8 <span style="font-family:'Liberation Sans';font-size:17px;letter-spacing:0.545px;line-height:0">00</span></span></div>
<div class="m" style="left:216px;top:903px;line-height:17px;"><span style="color:#e0e0e0">A<span style="font-family:'Liberation Sans';font-size:17px;letter-spacing:0.545px;line-height:0">0</span> 8D <span style="font-family:'Liberation Sans';font-size:17px;letter-spacing:0.545px;line-height:0">0</span>C 77</span></div>
<div class="b" style="left:216px;top:918px;width:110px;height:2px;background:#e05050;"></div>
<div class="m" style="left:336px;top:903px;line-height:17px;"><span style="color:#e0e0e0"><span style="font-family:'Liberation Sans';font-size:17px;letter-spacing:0.545px;line-height:0">0</span>6 <span style="font-family:'Liberation Sans';font-size:17px;letter-spacing:0.545px;line-height:0">00</span> <span style="font-family:'Liberation Sans';font-size:17px;letter-spacing:0.545px;line-height:0">0</span>8 <span style="font-family:'Liberation Sans';font-size:17px;letter-spacing:0.545px;line-height:0">00</span></span></div>
<div class="m" style="left:456px;top:903px;line-height:17px;"><span style="color:#e0e0e0">B<span style="font-family:'Liberation Sans';font-size:17px;letter-spacing:0.545px;line-height:0">0</span> 8D <span style="font-family:'Liberation Sans';font-size:17px;letter-spacing:0.545px;line-height:0">0</span>C 77</span></div>
<div class="b" style="left:456px;top:918px;width:110px;height:2px;background:#e05050;"></div>
<div class="m" style="left:573px;top:903px;line-height:17px;"><span style="color:#e0e0e0">.... ..w....°..w</span></div>
<div class="m" style="left:8px;top:920px;line-height:17px;"><span style="color:#b0b0b0">77<span style="font-family:'Liberation Sans';font-size:17px;letter-spacing:0.545px;line-height:0">0</span>C1<span style="font-family:'Liberation Sans';font-size:17px;letter-spacing:0.545px;line-height:0">0</span>9<span style="font-family:'Liberation Sans';font-size:17px;letter-spacing:0.545px;line-height:0">0</span></span></div>
<div class="m" style="left:96px;top:920px;line-height:17px;"><span style="color:#e0e0e0"><span style="font-family:'Liberation Sans';font-size:17px;letter-spacing:0.545px;line-height:0">0</span>6 <span style="font-family:'Liberation Sans';font-size:17px;letter-spacing:0.545px;line-height:0">00</span> <span style="font-family:'Liberation Sans';font-size:17px;letter-spacing:0.545px;line-height:0">0</span>8 <span style="font-family:'Liberation Sans';font-size:17px;letter-spacing:0.545px;line-height:0">00</span></span></div>
<div class="m" style="left:216px;top:920px;line-height:17px;"><span style="color:#e0e0e0">A8 8D <span style="font-family:'Liberation Sans';font-size:17px;letter-spacing:0.545px;line-height:0">0</span>C 77</span></div>
<div class="b" style="left:216px;top:935px;width:110px;height:2px;background:#e05050;"></div>
<div class="m" style="left:336px;top:920px;line-height:17px;"><span style="color:#e0e0e0"><span style="font-family:'Liberation Sans';font-size:17px;letter-spacing:0.545px;line-height:0">0</span>6 <span style="font-family:'Liberation Sans';font-size:17px;letter-spacing:0.545px;line-height:0">00</span> <span style="font-family:'Liberation Sans';font-size:17px;letter-spacing:0.545px;line-height:0">0</span>8 <span style="font-family:'Liberation Sans';font-size:17px;letter-spacing:0.545px;line-height:0">00</span></span></div>
<div class="m" style="left:456px;top:920px;line-height:17px;"><span style="color:#e0e0e0">B8 8D <span style="font-family:'Liberation Sans';font-size:17px;letter-spacing:0.545px;line-height:0">0</span>C 77</span></div>
<div class="b" style="left:456px;top:935px;width:110px;height:2px;background:#e05050;"></div>
<div class="m" style="left:573px;top:920px;line-height:17px;"><span style="color:#e0e0e0">....¨..w....¸..w</span></div>
<div class="m" style="left:8px;top:937px;line-height:17px;"><span style="color:#b0b0b0">77<span style="font-family:'Liberation Sans';font-size:17px;letter-spacing:0.545px;line-height:0">0</span>C1<span style="font-family:'Liberation Sans';font-size:17px;letter-spacing:0.545px;line-height:0">0</span>A<span style="font-family:'Liberation Sans';font-size:17px;letter-spacing:0.545px;line-height:0">0</span></span></div>
<div class="m" style="left:96px;top:937px;line-height:17px;"><span style="color:#e0e0e0"><span style="font-family:'Liberation Sans';font-size:17px;letter-spacing:0.545px;line-height:0">0</span>8 <span style="font-family:'Liberation Sans';font-size:17px;letter-spacing:0.545px;line-height:0">00</span> <span style="font-family:'Liberation Sans';font-size:17px;letter-spacing:0.545px;line-height:0">0</span>A <span style="font-family:'Liberation Sans';font-size:17px;letter-spacing:0.545px;line-height:0">00</span></span></div>
<div class="m" style="left:216px;top:937px;line-height:17px;"><span style="color:#e0e0e0">6<span style="font-family:'Liberation Sans';font-size:17px;letter-spacing:0.545px;line-height:0">0</span> 83 <span style="font-family:'Liberation Sans';font-size:17px;letter-spacing:0.545px;line-height:0">0</span>C 77</span></div>
<div class="b" style="left:216px;top:952px;width:110px;height:2px;background:#e05050;"></div>
<div class="m" style="left:336px;top:937px;line-height:17px;"><span style="color:#e0e0e0">1C <span style="font-family:'Liberation Sans';font-size:17px;letter-spacing:0.545px;line-height:0">00</span> 1E <span style="font-family:'Liberation Sans';font-size:17px;letter-spacing:0.545px;line-height:0">00</span></span></div>
<div class="m" style="left:456px;top:937px;line-height:17px;"><span style="color:#e0e0e0">5C 84 <span style="font-family:'Liberation Sans';font-size:17px;letter-spacing:0.545px;line-height:0">0</span>C 77</span></div>
<div class="b" style="left:456px;top:952px;width:110px;height:2px;background:#e05050;"></div>
<div class="m" style="left:573px;top:937px;line-height:17px;"><span style="color:#e0e0e0">....`..w....\..w</span></div>
<div class="m" style="left:8px;top:954px;line-height:17px;"><span style="color:#b0b0b0">77<span style="font-family:'Liberation Sans';font-size:17px;letter-spacing:0.545px;line-height:0">0</span>C1<span style="font-family:'Liberation Sans';font-size:17px;letter-spacing:0.545px;line-height:0">0</span>B<span style="font-family:'Liberation Sans';font-size:17px;letter-spacing:0.545px;line-height:0">0</span></span></div>
<div class="m" style="left:96px;top:954px;line-height:17px;"><span style="color:#e0e0e0">22 <span style="font-family:'Liberation Sans';font-size:17px;letter-spacing:0.545px;line-height:0">00</span> 24 <span style="font-family:'Liberation Sans';font-size:17px;letter-spacing:0.545px;line-height:0">00</span></span></div>
<div class="m" style="left:216px;top:954px;line-height:17px;"><span style="color:#e0e0e0">9<span style="font-family:'Liberation Sans';font-size:17px;letter-spacing:0.545px;line-height:0">0</span> 8C <span style="font-family:'Liberation Sans';font-size:17px;letter-spacing:0.545px;line-height:0">0</span>C 77</span></div>
<div class="b" style="left:216px;top:969px;width:110px;height:2px;background:#e05050;"></div>
<div class="m" style="left:336px;top:954px;line-height:17px;"><span style="color:#e0e0e0">2A <span style="font-family:'Liberation Sans';font-size:17px;letter-spacing:0.545px;line-height:0">00</span> 2C <span style="font-family:'Liberation Sans';font-size:17px;letter-spacing:0.545px;line-height:0">00</span></span></div>
<div class="m" style="left:456px;top:954px;line-height:17px;"><span style="color:#e0e0e0">B4 8C <span style="font-family:'Liberation Sans';font-size:17px;letter-spacing:0.545px;line-height:0">0</span>C 77</span></div>
<div class="b" style="left:456px;top:969px;width:110px;height:2px;background:#e05050;"></div>
<div class="m" style="left:573px;top:954px;line-height:17px;"><span style="color:#e0e0e0">".$....w*.,.´..w</span></div>
<svg style="left:1146px;top:750px" width="10" height="8"><path d="M1 7 L5 1 L9 7 Z" fill="#9a9a9a"/></svg>
<div class="b" style="left:1146px;top:761px;width:10px;height:198px;background:#3a3a3a;border-radius:5px"></div>
<div class="b" style="left:1146px;top:762px;width:10px;height:24px;background:#6e6e6e;border-radius:5px"></div>
<svg style="left:1146px;top:962px" width="10" height="8"><path d="M1 1 L5 7 L9 1 Z" fill="#9a9a9a"/></svg>
<div class="b" style="left:1162px;top:712px;width:1px;height:262px;background:#4a4a4a;"></div>
<div class="b" style="left:1163px;top:712px;width:757px;height:1px;background:#4a4a4a;"></div>
<div class="b" style="left:1164px;top:714px;width:736px;height:17px;background:#3a3a3a;"></div>
<div class="b" style="left:1251px;top:714px;width:1px;height:240px;background:#4a4a4a;"></div>
<div class="b" style="left:1342px;top:714px;width:1px;height:240px;background:#4a4a4a;"></div>
<div class="clip" style="left:1163px;top:714px;width:740px;height:240px">
<div class="m" style="left:5px;top:0px;line-height:17px;"><span style="color:#90e050"><span style="font-family:'Liberation Sans';font-size:17px;letter-spacing:0.545px;line-height:0">00</span>19FF74</span></div>
<div class="m" style="left:93px;top:0px;line-height:17px;"><span style="color:#e0e0e0">754C6359</span></div>
<div class="m" style="left:184px;top:0px;line-height:17px;"><span style="color:#e8708e"><span style="font-size:16px;letter-spacing:0;line-height:0">返回到</span> kernel32.754C6359 <span style="font-size:16px;letter-spacing:0;line-height:0">自</span> ???</span></div>
<div class="m" style="left:5px;top:17px;line-height:17px;"><span style="color:#b0b0b0"><span style="font-family:'Liberation Sans';font-size:17px;letter-spacing:0.545px;line-height:0">00</span>19FF78</span></div>
<div class="m" style="left:93px;top:17px;line-height:17px;"><span style="color:#e0e0e0"><span style="font-family:'Liberation Sans';font-size:17px;letter-spacing:0.545px;line-height:0">00</span>2<span style="font-family:'Liberation Sans';font-size:17px;letter-spacing:0.545px;line-height:0">0</span>7<span style="font-family:'Liberation Sans';font-size:17px;letter-spacing:0.545px;line-height:0">000</span></span></div>
<div class="m" style="left:5px;top:34px;line-height:17px;"><span style="color:#a890f0"><span style="font-family:'Liberation Sans';font-size:17px;letter-spacing:0.545px;line-height:0">00</span>19FF7C</span></div>
<div class="m" style="left:93px;top:34px;line-height:17px;"><span style="color:#e0e0e0">754C634<span style="font-family:'Liberation Sans';font-size:17px;letter-spacing:0.545px;line-height:0">0</span></span></div>
<div class="m" style="left:184px;top:34px;line-height:17px;"><span style="color:#e0e0e0">kernel32.754C634<span style="font-family:'Liberation Sans';font-size:17px;letter-spacing:0.545px;line-height:0">0</span></span></div>
<div class="m" style="left:5px;top:51px;line-height:17px;"><span style="color:#b0b0b0"><span style="font-family:'Liberation Sans';font-size:17px;letter-spacing:0.545px;line-height:0">00</span>19FF8<span style="font-family:'Liberation Sans';font-size:17px;letter-spacing:0.545px;line-height:0">0</span></span></div>
<div class="m" style="left:93px;top:51px;line-height:17px;"><span style="color:#e0e0e0"><span style="font-family:'Liberation Sans';font-size:17px;letter-spacing:0.545px;line-height:0">00</span>19FFDC</span></div>
<div class="m" style="left:5px;top:68px;line-height:17px;"><span style="color:#b0b0b0"><span style="font-family:'Liberation Sans';font-size:17px;letter-spacing:0.545px;line-height:0">00</span>19FF84</span></div>
<div class="m" style="left:96px;top:68px;line-height:17px;"><span style="color:#e0e0e0">77128944</span></div>
<div class="m" style="left:184px;top:68px;line-height:17px;"><span style="color:#e8708e"><span style="font-size:16px;letter-spacing:0;line-height:0">返回到</span> ntdll.77128944 <span style="font-size:16px;letter-spacing:0;line-height:0">自</span> ???</span></div>
<div class="m" style="left:5px;top:85px;line-height:17px;"><span style="color:#b0b0b0"><span style="font-family:'Liberation Sans';font-size:17px;letter-spacing:0.545px;line-height:0">00</span>19FF88</span></div>
<div class="m" style="left:96px;top:85px;line-height:17px;"><span style="color:#e0e0e0"><span style="font-family:'Liberation Sans';font-size:17px;letter-spacing:0.545px;line-height:0">00</span>2<span style="font-family:'Liberation Sans';font-size:17px;letter-spacing:0.545px;line-height:0">0</span>7<span style="font-family:'Liberation Sans';font-size:17px;letter-spacing:0.545px;line-height:0">000</span></span></div>
<div class="m" style="left:5px;top:102px;line-height:17px;"><span style="color:#b0b0b0"><span style="font-family:'Liberation Sans';font-size:17px;letter-spacing:0.545px;line-height:0">00</span>19FF8C</span></div>
<div class="m" style="left:96px;top:102px;line-height:17px;"><span style="color:#e0e0e0">9CF3A6C7</span></div>
<div class="m" style="left:5px;top:119px;line-height:17px;"><span style="color:#b0b0b0"><span style="font-family:'Liberation Sans';font-size:17px;letter-spacing:0.545px;line-height:0">00</span>19FF9<span style="font-family:'Liberation Sans';font-size:17px;letter-spacing:0.545px;line-height:0">0</span></span></div>
<div class="m" style="left:96px;top:119px;line-height:17px;"><span style="color:#e0e0e0"><span style="font-family:'Liberation Sans';font-size:17px;letter-spacing:0.545px;line-height:0">00000000</span></span></div>
<div class="m" style="left:5px;top:136px;line-height:17px;"><span style="color:#b0b0b0"><span style="font-family:'Liberation Sans';font-size:17px;letter-spacing:0.545px;line-height:0">00</span>19FF94</span></div>
<div class="m" style="left:96px;top:136px;line-height:17px;"><span style="color:#e0e0e0"><span style="font-family:'Liberation Sans';font-size:17px;letter-spacing:0.545px;line-height:0">00000000</span></span></div>
<div class="m" style="left:5px;top:153px;line-height:17px;"><span style="color:#b0b0b0"><span style="font-family:'Liberation Sans';font-size:17px;letter-spacing:0.545px;line-height:0">00</span>19FF98</span></div>
<div class="m" style="left:96px;top:153px;line-height:17px;"><span style="color:#e0e0e0"><span style="font-family:'Liberation Sans';font-size:17px;letter-spacing:0.545px;line-height:0">00</span>2<span style="font-family:'Liberation Sans';font-size:17px;letter-spacing:0.545px;line-height:0">0</span>7<span style="font-family:'Liberation Sans';font-size:17px;letter-spacing:0.545px;line-height:0">000</span></span></div>
<div class="m" style="left:5px;top:170px;line-height:17px;"><span style="color:#b0b0b0"><span style="font-family:'Liberation Sans';font-size:17px;letter-spacing:0.545px;line-height:0">00</span>19FF9C</span></div>
<div class="m" style="left:96px;top:170px;line-height:17px;"><span style="color:#e0e0e0"><span style="font-family:'Liberation Sans';font-size:17px;letter-spacing:0.545px;line-height:0">00000000</span></span></div>
<div class="m" style="left:5px;top:187px;line-height:17px;"><span style="color:#b0b0b0"><span style="font-family:'Liberation Sans';font-size:17px;letter-spacing:0.545px;line-height:0">00</span>19FFA<span style="font-family:'Liberation Sans';font-size:17px;letter-spacing:0.545px;line-height:0">0</span></span></div>
<div class="m" style="left:96px;top:187px;line-height:17px;"><span style="color:#e0e0e0"><span style="font-family:'Liberation Sans';font-size:17px;letter-spacing:0.545px;line-height:0">00000000</span></span></div>
<div class="m" style="left:5px;top:204px;line-height:17px;"><span style="color:#b0b0b0"><span style="font-family:'Liberation Sans';font-size:17px;letter-spacing:0.545px;line-height:0">00</span>19FFA4</span></div>
<div class="m" style="left:96px;top:204px;line-height:17px;"><span style="color:#e0e0e0"><span style="font-family:'Liberation Sans';font-size:17px;letter-spacing:0.545px;line-height:0">00000000</span></span></div>
<div class="m" style="left:5px;top:221px;line-height:17px;"><span style="color:#b0b0b0"><span style="font-family:'Liberation Sans';font-size:17px;letter-spacing:0.545px;line-height:0">00</span>19FFA8</span></div>
<div class="m" style="left:96px;top:221px;line-height:17px;"><span style="color:#e0e0e0"><span style="font-family:'Liberation Sans';font-size:17px;letter-spacing:0.545px;line-height:0">00000000</span></span></div>
<div class="m" style="left:5px;top:238px;line-height:17px;"><span style="color:#b0b0b0"><span style="font-family:'Liberation Sans';font-size:17px;letter-spacing:0.545px;line-height:0">00</span>19FFAC</span></div>
<div class="m" style="left:96px;top:238px;line-height:17px;"><span style="color:#e0e0e0"><span style="font-family:'Liberation Sans';font-size:17px;letter-spacing:0.545px;line-height:0">00000000</span></span></div>
</div>
<div class="b" style="left:1253px;top:785px;width:2px;height:170px;background:#e08070;"></div>
<div class="b" style="left:1253px;top:785px;width:5px;height:2px;background:#e08070;"></div>
<svg style="left:1904px;top:718px" width="10" height="8"><path d="M1 7 L5 1 L9 7 Z" fill="#9a9a9a"/></svg>
<div class="b" style="left:1904px;top:729px;width:10px;height:212px;background:#3a3a3a;border-radius:5px"></div>
<div class="b" style="left:1904px;top:913px;width:10px;height:24px;background:#6e6e6e;border-radius:5px"></div>
<svg style="left:1904px;top:944px" width="10" height="8"><path d="M1 1 L5 7 L9 1 Z" fill="#9a9a9a"/></svg>
<svg style="left:1170px;top:958px" width="8" height="10"><path d="M7 1 L1 5 L7 9 Z" fill="#9a9a9a"/></svg>
<div class="b" style="left:1180px;top:958px;width:708px;height:10px;background:#3a3a3a;border-radius:5px"></div>
<div class="b" style="left:1180px;top:958px;width:218px;height:10px;background:#6e6e6e;border-radius:5px"></div>
<svg style="left:1890px;top:958px" width="8" height="10"><path d="M1 1 L7 5 L1 9 Z" fill="#9a9a9a"/></svg>
<div class="t" style="left:3px;top:980px;color:#e0e0e0;font-size:16px;font-family:'Liberation Sans',sans-serif;line-height:20px;">命令:</div>
<div class="b" style="left:48px;top:977px;width:1766px;height:24px;background:#333333;"></div>
<div class="t" style="left:1821px;top:979px;color:#e0e0e0;font-size:15px;font-family:'Liberation Sans',sans-serif;line-height:20px;">默认</div>
<svg style="left:1905px;top:987px" width="11" height="7"><path d="M0 0 H11 L5.5 6 Z" fill="#9a9a9a"/></svg>
<div class="t" style="left:14px;top:1007px;color:#b0a040;font-size:15px;font-family:'Liberation Sans',sans-serif;line-height:20px;">已暂停</div>
<div class="t" style="left:78px;top:1009px;color:#e0e0e0;font-size:16px;letter-spacing:-1.6px;line-height:20px;font-family:'Liberation Mono',monospace">crackme2.exe: 0040134B -&gt; 0040134F (0x00000005 bytes)</div>
<div class="t" style="left:1600px;top:1006px;width:1317px;color:#e0e0e0;font-size:16px;line-height:20px;font-family:'Liberation Sans',sans-serif"></div>
<div class="t" style="left:1742px;top:1008px;color:#e0e0e0;font-size:15px;line-height:20px;font-family:'Liberation Sans',sans-serif">已调试时间：<span style="font-family:'Liberation Mono';font-size:16px;letter-spacing:-1.6px"> 2:11:57:31</span></div>
</body></html>
